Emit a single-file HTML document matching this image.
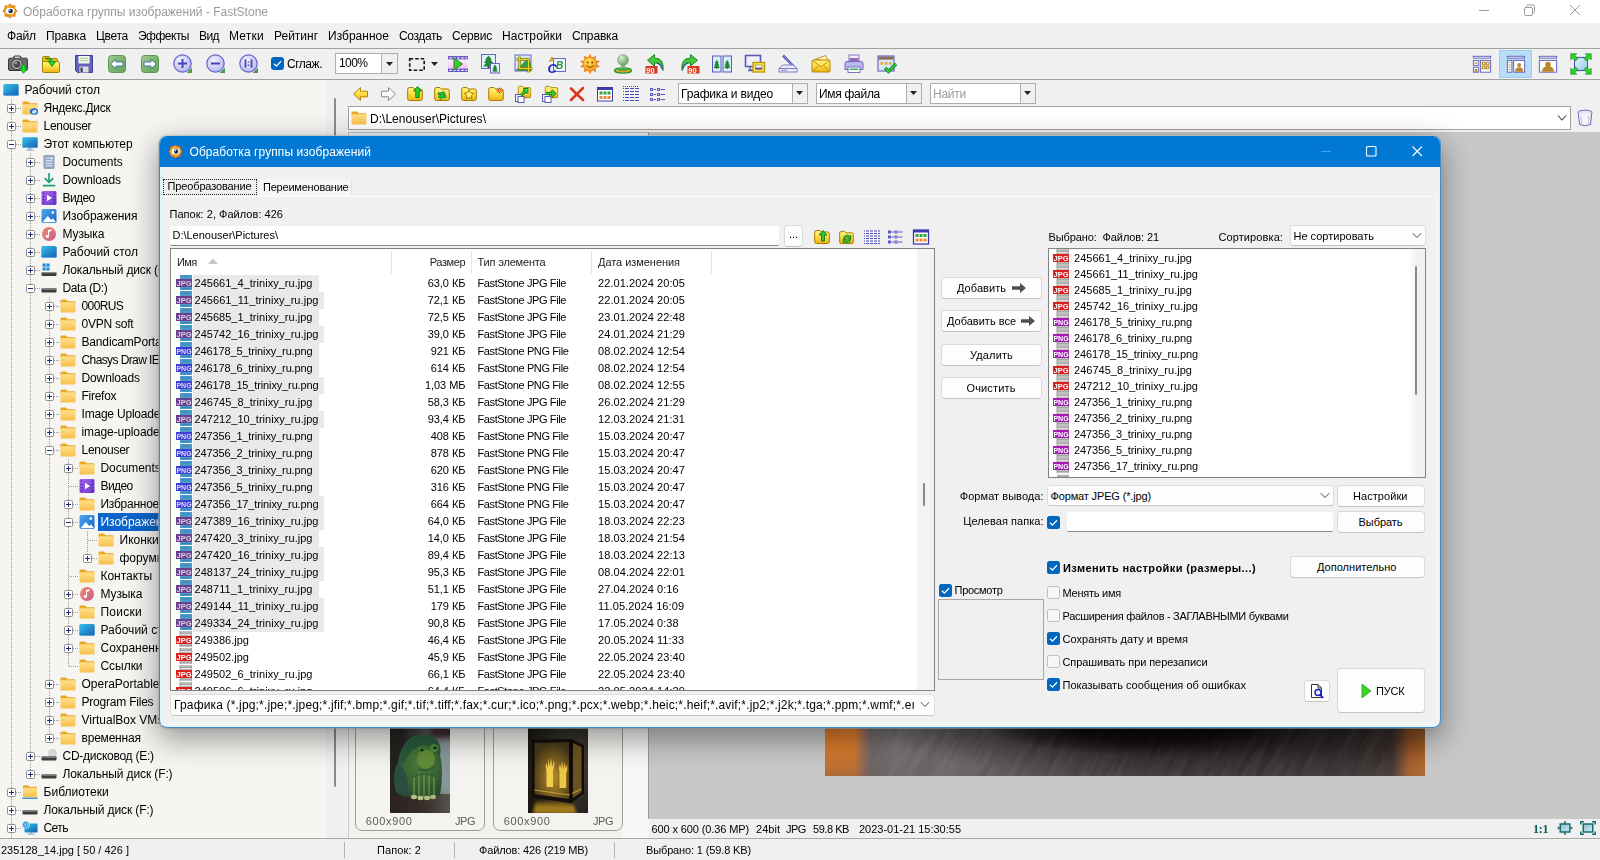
<!DOCTYPE html>
<html lang="ru"><head><meta charset="utf-8"><title>FastStone</title><style>
html,body{margin:0;padding:0}
body{width:1600px;height:860px;overflow:hidden;position:relative;background:#f0f0f0;font-family:'Liberation Sans',sans-serif}
body div,body svg,body span.t{position:absolute}
span.t{white-space:pre;height:16px}
</style></head><body>
<div style="left:0px;top:0px;width:1600px;height:23px;background:#fff"></div>
<span class="t" style="top:3.5px;font-size:12px;line-height:16px;color:#9a9a9a;letter-spacing:0.005px;left:23px;">Обработка группы изображений - FastStone</span>
<svg style="left:1470px;top:0" width="130" height="22" viewBox="0 0 130 22" fill="none" stroke="#9a9a9a" stroke-width="1"><path d="M9 10.500h10"/><rect x="54.500" y="7.500" width="8" height="8" rx="1.500"/><path d="M56.500 7.500v-1a1.500 1.500 0 0 1 1.500-1.500h5a1.500 1.500 0 0 1 1.500 1.500v5a1.500 1.500 0 0 1-1.500 1.500h-1"/><path d="M100 5l10 10M110 5l-10 10"/></svg>
<div style="left:0px;top:23px;width:1600px;height:25px;background:#f0f0f0"></div>
<span class="t" style="top:27.5px;font-size:12px;line-height:16px;color:#000;letter-spacing:-0.129px;left:7px;">Файл</span>
<span class="t" style="top:27.5px;font-size:12px;line-height:16px;color:#000;letter-spacing:-0.091px;left:46px;">Правка</span>
<span class="t" style="top:27.5px;font-size:12px;line-height:16px;color:#000;letter-spacing:-0.287px;left:96px;">Цвета</span>
<span class="t" style="top:27.5px;font-size:12px;line-height:16px;color:#000;letter-spacing:-0.509px;left:138px;">Эффекты</span>
<span class="t" style="top:27.5px;font-size:12px;line-height:16px;color:#000;letter-spacing:-0.573px;left:199px;">Вид</span>
<span class="t" style="top:27.5px;font-size:12px;line-height:16px;color:#000;letter-spacing:0.228px;left:229px;">Метки</span>
<span class="t" style="top:27.5px;font-size:12px;line-height:16px;color:#000;letter-spacing:-0.009px;left:274px;">Рейтинг</span>
<span class="t" style="top:27.5px;font-size:12px;line-height:16px;color:#000;letter-spacing:0.019px;left:328px;">Избранное</span>
<span class="t" style="top:27.5px;font-size:12px;line-height:16px;color:#000;letter-spacing:-0.373px;left:399px;">Создать</span>
<span class="t" style="top:27.5px;font-size:12px;line-height:16px;color:#000;letter-spacing:-0.182px;left:452px;">Сервис</span>
<span class="t" style="top:27.5px;font-size:12px;line-height:16px;color:#000;letter-spacing:0.128px;left:502px;">Настройки</span>
<span class="t" style="top:27.5px;font-size:12px;line-height:16px;color:#000;letter-spacing:-0.154px;left:572px;">Справка</span>
<div style="left:0px;top:48px;width:1600px;height:32px;background:#f0f0f0;border-top:1px solid #a0a0a0;border-bottom:1px solid #a0a0a0;box-sizing:border-box"></div>
<div style="left:0px;top:80px;width:326px;height:758px;background:#f6f5f1"></div>
<div style="left:326px;top:80px;width:19px;height:758px;background:#f0f0f0"></div>
<div style="left:334px;top:98px;width:2px;height:689px;background:#8a8a8a;border-radius:1px"></div>
<div style="left:345px;top:80px;width:1255px;height:26px;background:#f0f0f0"></div>
<div style="left:345px;top:106px;width:1255px;height:30px;background:#f0f0f0"></div>
<div style="left:348px;top:106px;width:1223px;height:24px;background:#fff;border:1px solid #a0a0a0;box-sizing:border-box"></div>
<span class="t" style="top:110.5px;font-size:12px;line-height:16px;color:#000;letter-spacing:0.029px;left:370px;">D:\Lenouser\Pictures\</span>
<svg style="left:1557px;top:114px" width="10" height="8" viewBox="0 0 10 8" fill="none" stroke="#444" stroke-width="1.100"><path d="M1 1.500l4 4.500 4-4.500"/></svg>
<div style="left:678px;top:83px;width:130px;height:21px;background:#fff;border:1px solid #adadad;box-sizing:border-box"></div>
<div style="left:792px;top:84px;width:15px;height:19px;background:#f0f0f0;border-left:1px solid #adadad;box-sizing:border-box"></div>
<svg style="left:796px;top:91px" width="7" height="4" viewBox="0 0 7 4"><path d="M0 0h7L3.500 4z" fill="#222"/></svg>
<span class="t" style="top:85.5px;font-size:12px;line-height:16px;color:#000;letter-spacing:-0.182px;left:681px;">Графика и видео</span>
<div style="left:816px;top:83px;width:106px;height:21px;background:#fff;border:1px solid #adadad;box-sizing:border-box"></div>
<div style="left:906px;top:84px;width:15px;height:19px;background:#f0f0f0;border-left:1px solid #adadad;box-sizing:border-box"></div>
<svg style="left:910px;top:91px" width="7" height="4" viewBox="0 0 7 4"><path d="M0 0h7L3.500 4z" fill="#222"/></svg>
<span class="t" style="top:85.5px;font-size:12px;line-height:16px;color:#000;letter-spacing:-0.293px;left:819px;">Имя файла</span>
<div style="left:930px;top:83px;width:106px;height:21px;background:#fff;border:1px solid #adadad;box-sizing:border-box"></div>
<div style="left:1020px;top:84px;width:15px;height:19px;background:#f0f0f0;border-left:1px solid #adadad;box-sizing:border-box"></div>
<svg style="left:1024px;top:91px" width="7" height="4" viewBox="0 0 7 4"><path d="M0 0h7L3.500 4z" fill="#222"/></svg>
<span class="t" style="top:85.5px;font-size:12px;line-height:16px;color:#9a9a9a;letter-spacing:-0.250px;left:933px;">Найти</span>
<div style="left:345px;top:132px;width:304px;height:706px;background:#f3f2ee"></div>
<div style="left:348px;top:132px;width:1px;height:706px;background:#c9c9c9"></div>
<div style="left:622px;top:132px;width:27px;height:706px;background:#f7f7f5"></div>
<div style="left:348px;top:132px;width:300px;height:1px;background:#bcbcbc"></div>
<div style="left:349px;top:133px;width:299px;height:3px;background:#eef1f5"></div>
<div style="left:649px;top:132px;width:951px;height:687px;background:#c8c8c8"></div>
<div style="left:648px;top:132px;width:1px;height:687px;background:#9a9a9a"></div>
<div style="left:649px;top:819px;width:951px;height:19px;background:#f0f0f0"></div>
<span class="t" style="top:821.0px;font-size:11px;line-height:16px;color:#000;letter-spacing:-0.114px;left:651.5px;">600 x 600 (0.36 MP)</span>
<span class="t" style="top:821.0px;font-size:11px;line-height:16px;color:#000;letter-spacing:0.028px;left:756px;">24bit</span>
<span class="t" style="top:821.0px;font-size:11px;line-height:16px;color:#000;letter-spacing:-0.600px;left:786px;">JPG</span>
<span class="t" style="top:821.0px;font-size:11px;line-height:16px;color:#000;letter-spacing:-0.449px;left:813px;">59.8 KB</span>
<span class="t" style="top:821.0px;font-size:11px;line-height:16px;color:#000;letter-spacing:-0.008px;left:859px;">2023-01-21 15:30:55</span>
<span class="t" style="top:820.5px;font-size:11px;line-height:16px;color:#0a5a5a;font-weight:700;letter-spacing:-0.302px;left:1533px;font-family:'Liberation Serif',serif;font-size:12px;">1:1</span>
<div style="left:0px;top:838px;width:1600px;height:22px;background:#f0f0f0;border-top:1px solid #a8a8a8;box-sizing:border-box"></div>
<div style="left:344px;top:842px;width:1px;height:16px;background:#b4b4b4"></div>
<div style="left:454px;top:842px;width:1px;height:16px;background:#b4b4b4"></div>
<div style="left:614px;top:842px;width:1px;height:16px;background:#b4b4b4"></div>
<span class="t" style="top:842.0px;font-size:11px;line-height:16px;color:#000;letter-spacing:0.006px;left:1px;">235128_14.jpg [ 50 / 426 ]</span>
<span class="t" style="top:842.0px;font-size:11px;line-height:16px;color:#000;letter-spacing:0.107px;left:377px;">Папок: 2</span>
<span class="t" style="top:842.0px;font-size:11px;line-height:16px;color:#000;letter-spacing:-0.145px;left:479px;">Файлов: 426 (219 MB)</span>
<span class="t" style="top:842.0px;font-size:11px;line-height:16px;color:#000;letter-spacing:-0.137px;left:646px;">Выбрано: 1 (59.8 KB)</span>

<svg width="0" height="0" style="left:0;top:0"><defs>
<linearGradient id="gF" x1="0" y1="0" x2="0" y2="1"><stop offset="0" stop-color="#ffe08a"/><stop offset="1" stop-color="#f7c04a"/></linearGradient>
<linearGradient id="gD" x1="0" y1="0" x2="1" y2="1"><stop offset="0" stop-color="#35c3ea"/><stop offset="1" stop-color="#155fb4"/></linearGradient>
<linearGradient id="gM" x1="0" y1="0" x2="1" y2="1"><stop offset="0" stop-color="#f08a6a"/><stop offset="1" stop-color="#c85a8c"/></linearGradient>
<linearGradient id="gP" x1="0" y1="0" x2="1" y2="1"><stop offset="0" stop-color="#4aa8f0"/><stop offset="1" stop-color="#1b63c8"/></linearGradient>
<linearGradient id="gV" x1="0" y1="0" x2="1" y2="1"><stop offset="0" stop-color="#a868f0"/><stop offset="1" stop-color="#6a38c8"/></linearGradient>
<symbol id="folder" viewBox="0 0 16 14"><path d="M0.500 1.800Q0.500 0.600 1.700 0.600H5.600Q6.300 0.600 6.800 1.200L7.600 2.200H14.400Q15.500 2.200 15.500 3.300V5H0.500z" fill="#e9a825"/><rect x="0.500" y="3.300" width="15" height="10.200" rx="1.100" fill="url(#gF)"/></symbol>
<symbol id="desktop" viewBox="0 0 16 14"><rect x="0.300" y="1" width="15.400" height="11.600" rx="1.600" fill="url(#gD)"/><rect x="0.300" y="10.600" width="15.400" height="2" rx="1" fill="#1a78c8" opacity=".7"/></symbol>
<symbol id="computer" viewBox="0 0 16 14"><rect x="0.300" y="0.300" width="15.400" height="10.400" rx="1.300" fill="url(#gD)"/><rect x="6.600" y="10.700" width="2.800" height="1.900" fill="#7da6c8"/><rect x="4" y="12.500" width="8" height="1.200" rx=".6" fill="#9ab4c8"/></symbol>
<symbol id="docs" viewBox="0 0 16 14"><rect x="2.500" y="0" width="11" height="14" rx="1.200" fill="#9aaccb"/><rect x="2.500" y="0" width="11" height="14" rx="1.200" fill="#7f95bd" opacity=".35"/><path d="M4.500 3.200h4M4.500 5.700h7M4.500 8.200h7M4.500 10.700h7" stroke="#eef2f8" stroke-width="1.100"/><rect x="9.300" y="2.300" width="2.400" height="2" fill="#eef2f8"/></symbol>
<symbol id="down" viewBox="0 0 16 14"><path d="M8 0.500v8.500M4.200 5.600L8 9.400l3.800-3.800" fill="none" stroke="#1d9f7c" stroke-width="1.700" stroke-linecap="round" stroke-linejoin="round"/><path d="M2.500 12.700h11" stroke="#1d9f7c" stroke-width="1.700" stroke-linecap="round"/></symbol>
<symbol id="video" viewBox="0 0 16 14"><rect x="0.500" y="0" width="15" height="14" rx="1.300" fill="url(#gV)"/><path d="M1.700 1.500h1.600v1.600H1.700zM1.700 4.700h1.600v1.600H1.700zM1.700 7.900h1.600v1.600H1.700zM1.700 11h1.600v1.600H1.700zM12.700 1.500h1.600v1.600h-1.600zM12.700 4.700h1.600v1.600h-1.600zM12.700 7.900h1.600v1.600h-1.600zM12.700 11h1.600v1.600h-1.600z" fill="#3a1a8a" opacity=".75"/><path d="M6 3.800v6.400l5-3.200z" fill="#fff"/></symbol>
<symbol id="pics" viewBox="0 0 16 14"><rect x="0.500" y="0" width="15" height="14" rx="1.500" fill="url(#gP)"/><path d="M1.500 13.200l5.200-6.200 3.600 4 1.700-1.800 3 4z" fill="#fff"/><circle cx="11.800" cy="3.600" r="1.300" fill="#fff"/></symbol>
<symbol id="music" viewBox="0 0 16 14"><circle cx="8" cy="7" r="7" fill="url(#gM)"/><path d="M7 3.200l3.600-.9v1.800L8 4.800v4.700a1.700 1.500 0 1 1-1-1.400z" fill="#fff"/></symbol>
<symbol id="drive" viewBox="0 0 16 14"><rect x="0.500" y="7.300" width="15" height="4.200" rx="1" fill="#3c3c3c"/><rect x="0.500" y="7.300" width="15" height="1.400" rx=".7" fill="#8a8a8a"/></symbol>
<symbol id="windrive" viewBox="0 0 16 14"><rect x="0.500" y="9" width="15" height="4" rx="1" fill="#3c3c3c"/><rect x="0.500" y="9" width="15" height="1.300" rx=".6" fill="#8a8a8a"/><path d="M1.500 0.500h3.200v3.200H1.500zM5.400 0.500h3.200v3.200H5.400zM1.500 4.400h3.200v3.200H1.500zM5.400 4.400h3.200v3.200H5.400z" fill="#1e8fe0"/></symbol>
<symbol id="cddrive" viewBox="0 0 16 14"><circle cx="11.500" cy="4.200" r="3.800" fill="#dcdcdc" stroke="#b4b4b4" stroke-width=".6"/><circle cx="11.500" cy="4.200" r="1.100" fill="#fff" stroke="#aaa" stroke-width=".5"/><rect x="0.500" y="7.300" width="15" height="4.200" rx="1" fill="#3c3c3c"/><rect x="0.500" y="7.300" width="15" height="1.400" rx=".7" fill="#8a8a8a"/></symbol>
<symbol id="lib" viewBox="0 0 16 14"><path d="M1 1.200Q1 0.200 2 0.200H5.600Q6.300 0.200 6.800 0.800L7.500 1.700H14Q15 1.700 15 2.700V5H1z" fill="#e9a825"/><rect x="1" y="2.800" width="14" height="9.400" rx="1" fill="url(#gF)"/><rect x="0.300" y="12.600" width="15.400" height="1.300" fill="#2a86d8"/></symbol>
<symbol id="net" viewBox="0 0 16 14"><rect x="2.500" y="2.500" width="13" height="9" rx="1.200" fill="url(#gD)"/><rect x="7.700" y="11.500" width="2.600" height="1.400" fill="#7da6c8"/><rect x="5.500" y="12.800" width="7" height="1" rx=".5" fill="#9ab4c8"/><circle cx="4" cy="3.800" r="3.600" fill="#3a9ae0" stroke="#cfe6f8" stroke-width=".7"/><path d="M2 2.500q2 1 1.500 3M5.500 1.500q-1 2 .8 4" stroke="#d8f0d0" stroke-width=".9" fill="none"/></symbol>
<symbol id="yadisk" viewBox="0 0 16 14"><path d="M0.500 1.800Q0.500 0.600 1.700 0.600H5.600Q6.300 0.600 6.800 1.200L7.600 2.200H14.400Q15.500 2.200 15.500 3.300V5H0.500z" fill="#e9a825"/><rect x="0.500" y="3.300" width="15" height="10.200" rx="1.100" fill="url(#gF)"/><ellipse cx="12" cy="10.500" rx="4" ry="3.300" fill="#1a6fd0"/><ellipse cx="12.300" cy="10.800" rx="2.300" ry="1.700" fill="#fff" transform="rotate(-25 12.300 10.800)"/><ellipse cx="12" cy="11" rx="1" ry=".7" fill="#6ab0f0" transform="rotate(-25 12 11)"/></symbol>
</defs></svg>

<div style="left:11px;top:99px;width:1px;height:730px;background:repeating-linear-gradient(to bottom,#9c9c9c 0 1px,transparent 1px 2px)"></div>
<div style="left:30px;top:153px;width:1px;height:622px;background:repeating-linear-gradient(to bottom,#9c9c9c 0 1px,transparent 1px 2px)"></div>
<div style="left:49px;top:297px;width:1px;height:442px;background:repeating-linear-gradient(to bottom,#9c9c9c 0 1px,transparent 1px 2px)"></div>
<div style="left:68px;top:459px;width:1px;height:208px;background:repeating-linear-gradient(to bottom,#9c9c9c 0 1px,transparent 1px 2px)"></div>
<div style="left:87px;top:531px;width:1px;height:28px;background:repeating-linear-gradient(to bottom,#9c9c9c 0 1px,transparent 1px 2px)"></div>
<div style="left:11px;top:833px;width:1px;height:5px;background:repeating-linear-gradient(to bottom,#9c9c9c 0 1px,transparent 1px 2px)"></div>
<svg style="left:3px;top:83px" width="16" height="14"><use href="#desktop"/></svg>
<span class="t" style="top:82.0px;font-size:12px;line-height:16px;color:#000;letter-spacing:0.014px;left:24.5px;">Рабочий стол</span>
<div style="left:12px;top:108px;width:10px;height:1px;background:repeating-linear-gradient(to right,#9c9c9c 0 1px,transparent 1px 2px)"></div>
<div style="left:7px;top:104px;width:9px;height:9px;background:#fff;border:1px solid #8f8f8f;border-radius:1.500px;box-sizing:border-box"><i style="position:absolute;left:1px;top:3px;width:5px;height:1px;background:#1f2f7a"></i><i style="position:absolute;left:3px;top:1px;width:1px;height:5px;background:#1f2f7a"></i></div>
<svg style="left:22px;top:101px" width="16" height="14"><use href="#yadisk"/></svg>
<span class="t" style="top:100.0px;font-size:12px;line-height:16px;color:#000;letter-spacing:-0.253px;left:43.5px;">Яндекс.Диск</span>
<div style="left:12px;top:126px;width:10px;height:1px;background:repeating-linear-gradient(to right,#9c9c9c 0 1px,transparent 1px 2px)"></div>
<div style="left:7px;top:122px;width:9px;height:9px;background:#fff;border:1px solid #8f8f8f;border-radius:1.500px;box-sizing:border-box"><i style="position:absolute;left:1px;top:3px;width:5px;height:1px;background:#1f2f7a"></i><i style="position:absolute;left:3px;top:1px;width:1px;height:5px;background:#1f2f7a"></i></div>
<svg style="left:22px;top:119px" width="16" height="14"><use href="#folder"/></svg>
<span class="t" style="top:118.0px;font-size:12px;line-height:16px;color:#000;letter-spacing:-0.281px;left:43.5px;">Lenouser</span>
<div style="left:12px;top:144px;width:10px;height:1px;background:repeating-linear-gradient(to right,#9c9c9c 0 1px,transparent 1px 2px)"></div>
<div style="left:7px;top:140px;width:9px;height:9px;background:#fff;border:1px solid #8f8f8f;border-radius:1.500px;box-sizing:border-box"><i style="position:absolute;left:1px;top:3px;width:5px;height:1px;background:#1f2f7a"></i></div>
<svg style="left:22px;top:137px" width="16" height="14"><use href="#computer"/></svg>
<span class="t" style="top:136.0px;font-size:12px;line-height:16px;color:#000;letter-spacing:-0.052px;left:43.5px;">Этот компьютер</span>
<div style="left:31px;top:162px;width:10px;height:1px;background:repeating-linear-gradient(to right,#9c9c9c 0 1px,transparent 1px 2px)"></div>
<div style="left:26px;top:158px;width:9px;height:9px;background:#fff;border:1px solid #8f8f8f;border-radius:1.500px;box-sizing:border-box"><i style="position:absolute;left:1px;top:3px;width:5px;height:1px;background:#1f2f7a"></i><i style="position:absolute;left:3px;top:1px;width:1px;height:5px;background:#1f2f7a"></i></div>
<svg style="left:41px;top:155px" width="16" height="14"><use href="#docs"/></svg>
<span class="t" style="top:154.0px;font-size:12px;line-height:16px;color:#000;letter-spacing:-0.056px;left:62.5px;">Documents</span>
<div style="left:31px;top:180px;width:10px;height:1px;background:repeating-linear-gradient(to right,#9c9c9c 0 1px,transparent 1px 2px)"></div>
<div style="left:26px;top:176px;width:9px;height:9px;background:#fff;border:1px solid #8f8f8f;border-radius:1.500px;box-sizing:border-box"><i style="position:absolute;left:1px;top:3px;width:5px;height:1px;background:#1f2f7a"></i><i style="position:absolute;left:3px;top:1px;width:1px;height:5px;background:#1f2f7a"></i></div>
<svg style="left:41px;top:173px" width="16" height="14"><use href="#down"/></svg>
<span class="t" style="top:172.0px;font-size:12px;line-height:16px;color:#000;letter-spacing:-0.108px;left:62.5px;">Downloads</span>
<div style="left:31px;top:198px;width:10px;height:1px;background:repeating-linear-gradient(to right,#9c9c9c 0 1px,transparent 1px 2px)"></div>
<div style="left:26px;top:194px;width:9px;height:9px;background:#fff;border:1px solid #8f8f8f;border-radius:1.500px;box-sizing:border-box"><i style="position:absolute;left:1px;top:3px;width:5px;height:1px;background:#1f2f7a"></i><i style="position:absolute;left:3px;top:1px;width:1px;height:5px;background:#1f2f7a"></i></div>
<svg style="left:41px;top:191px" width="16" height="14"><use href="#video"/></svg>
<span class="t" style="top:190.0px;font-size:12px;line-height:16px;color:#000;letter-spacing:-0.600px;left:62.5px;">Видео</span>
<div style="left:31px;top:216px;width:10px;height:1px;background:repeating-linear-gradient(to right,#9c9c9c 0 1px,transparent 1px 2px)"></div>
<div style="left:26px;top:212px;width:9px;height:9px;background:#fff;border:1px solid #8f8f8f;border-radius:1.500px;box-sizing:border-box"><i style="position:absolute;left:1px;top:3px;width:5px;height:1px;background:#1f2f7a"></i><i style="position:absolute;left:3px;top:1px;width:1px;height:5px;background:#1f2f7a"></i></div>
<svg style="left:41px;top:209px" width="16" height="14"><use href="#pics"/></svg>
<span class="t" style="top:208.0px;font-size:12px;line-height:16px;color:#000;letter-spacing:-0.038px;left:62.5px;">Изображения</span>
<div style="left:31px;top:234px;width:10px;height:1px;background:repeating-linear-gradient(to right,#9c9c9c 0 1px,transparent 1px 2px)"></div>
<div style="left:26px;top:230px;width:9px;height:9px;background:#fff;border:1px solid #8f8f8f;border-radius:1.500px;box-sizing:border-box"><i style="position:absolute;left:1px;top:3px;width:5px;height:1px;background:#1f2f7a"></i><i style="position:absolute;left:3px;top:1px;width:1px;height:5px;background:#1f2f7a"></i></div>
<svg style="left:41px;top:227px" width="16" height="14"><use href="#music"/></svg>
<span class="t" style="top:226.0px;font-size:12px;line-height:16px;color:#000;letter-spacing:-0.109px;left:62.5px;">Музыка</span>
<div style="left:31px;top:252px;width:10px;height:1px;background:repeating-linear-gradient(to right,#9c9c9c 0 1px,transparent 1px 2px)"></div>
<div style="left:26px;top:248px;width:9px;height:9px;background:#fff;border:1px solid #8f8f8f;border-radius:1.500px;box-sizing:border-box"><i style="position:absolute;left:1px;top:3px;width:5px;height:1px;background:#1f2f7a"></i><i style="position:absolute;left:3px;top:1px;width:1px;height:5px;background:#1f2f7a"></i></div>
<svg style="left:41px;top:245px" width="16" height="14"><use href="#desktop"/></svg>
<span class="t" style="top:244.0px;font-size:12px;line-height:16px;color:#000;letter-spacing:0.014px;left:62.5px;">Рабочий стол</span>
<div style="left:31px;top:270px;width:10px;height:1px;background:repeating-linear-gradient(to right,#9c9c9c 0 1px,transparent 1px 2px)"></div>
<div style="left:26px;top:266px;width:9px;height:9px;background:#fff;border:1px solid #8f8f8f;border-radius:1.500px;box-sizing:border-box"><i style="position:absolute;left:1px;top:3px;width:5px;height:1px;background:#1f2f7a"></i><i style="position:absolute;left:3px;top:1px;width:1px;height:5px;background:#1f2f7a"></i></div>
<svg style="left:41px;top:263px" width="16" height="14"><use href="#windrive"/></svg>
<span class="t" style="top:262.0px;font-size:12px;line-height:16px;color:#000;letter-spacing:-0.135px;left:62.5px;">Локальный диск (C:)</span>
<div style="left:31px;top:288px;width:10px;height:1px;background:repeating-linear-gradient(to right,#9c9c9c 0 1px,transparent 1px 2px)"></div>
<div style="left:26px;top:284px;width:9px;height:9px;background:#fff;border:1px solid #8f8f8f;border-radius:1.500px;box-sizing:border-box"><i style="position:absolute;left:1px;top:3px;width:5px;height:1px;background:#1f2f7a"></i></div>
<svg style="left:41px;top:281px" width="16" height="14"><use href="#drive"/></svg>
<span class="t" style="top:280.0px;font-size:12px;line-height:16px;color:#000;letter-spacing:-0.432px;left:62.5px;">Data (D:)</span>
<div style="left:50px;top:306px;width:10px;height:1px;background:repeating-linear-gradient(to right,#9c9c9c 0 1px,transparent 1px 2px)"></div>
<div style="left:45px;top:302px;width:9px;height:9px;background:#fff;border:1px solid #8f8f8f;border-radius:1.500px;box-sizing:border-box"><i style="position:absolute;left:1px;top:3px;width:5px;height:1px;background:#1f2f7a"></i><i style="position:absolute;left:3px;top:1px;width:1px;height:5px;background:#1f2f7a"></i></div>
<svg style="left:60px;top:299px" width="16" height="14"><use href="#folder"/></svg>
<span class="t" style="top:298.0px;font-size:12px;line-height:16px;color:#000;letter-spacing:-0.600px;left:81.5px;">000RUS</span>
<div style="left:50px;top:324px;width:10px;height:1px;background:repeating-linear-gradient(to right,#9c9c9c 0 1px,transparent 1px 2px)"></div>
<div style="left:45px;top:320px;width:9px;height:9px;background:#fff;border:1px solid #8f8f8f;border-radius:1.500px;box-sizing:border-box"><i style="position:absolute;left:1px;top:3px;width:5px;height:1px;background:#1f2f7a"></i><i style="position:absolute;left:3px;top:1px;width:1px;height:5px;background:#1f2f7a"></i></div>
<svg style="left:60px;top:317px" width="16" height="14"><use href="#folder"/></svg>
<span class="t" style="top:316.0px;font-size:12px;line-height:16px;color:#000;letter-spacing:-0.237px;left:81.5px;">0VPN soft</span>
<div style="left:50px;top:342px;width:10px;height:1px;background:repeating-linear-gradient(to right,#9c9c9c 0 1px,transparent 1px 2px)"></div>
<div style="left:45px;top:338px;width:9px;height:9px;background:#fff;border:1px solid #8f8f8f;border-radius:1.500px;box-sizing:border-box"><i style="position:absolute;left:1px;top:3px;width:5px;height:1px;background:#1f2f7a"></i><i style="position:absolute;left:3px;top:1px;width:1px;height:5px;background:#1f2f7a"></i></div>
<svg style="left:60px;top:335px" width="16" height="14"><use href="#folder"/></svg>
<span class="t" style="top:334.0px;font-size:12px;line-height:16px;color:#000;letter-spacing:-0.160px;left:81.5px;">BandicamPortable</span>
<div style="left:50px;top:360px;width:10px;height:1px;background:repeating-linear-gradient(to right,#9c9c9c 0 1px,transparent 1px 2px)"></div>
<div style="left:45px;top:356px;width:9px;height:9px;background:#fff;border:1px solid #8f8f8f;border-radius:1.500px;box-sizing:border-box"><i style="position:absolute;left:1px;top:3px;width:5px;height:1px;background:#1f2f7a"></i><i style="position:absolute;left:3px;top:1px;width:1px;height:5px;background:#1f2f7a"></i></div>
<svg style="left:60px;top:353px" width="16" height="14"><use href="#folder"/></svg>
<span class="t" style="top:352.0px;font-size:12px;line-height:16px;color:#000;letter-spacing:-0.600px;left:81.5px;">Chasys Draw IES</span>
<div style="left:50px;top:378px;width:10px;height:1px;background:repeating-linear-gradient(to right,#9c9c9c 0 1px,transparent 1px 2px)"></div>
<div style="left:45px;top:374px;width:9px;height:9px;background:#fff;border:1px solid #8f8f8f;border-radius:1.500px;box-sizing:border-box"><i style="position:absolute;left:1px;top:3px;width:5px;height:1px;background:#1f2f7a"></i><i style="position:absolute;left:3px;top:1px;width:1px;height:5px;background:#1f2f7a"></i></div>
<svg style="left:60px;top:371px" width="16" height="14"><use href="#folder"/></svg>
<span class="t" style="top:370.0px;font-size:12px;line-height:16px;color:#000;letter-spacing:-0.108px;left:81.5px;">Downloads</span>
<div style="left:50px;top:396px;width:10px;height:1px;background:repeating-linear-gradient(to right,#9c9c9c 0 1px,transparent 1px 2px)"></div>
<div style="left:45px;top:392px;width:9px;height:9px;background:#fff;border:1px solid #8f8f8f;border-radius:1.500px;box-sizing:border-box"><i style="position:absolute;left:1px;top:3px;width:5px;height:1px;background:#1f2f7a"></i><i style="position:absolute;left:3px;top:1px;width:1px;height:5px;background:#1f2f7a"></i></div>
<svg style="left:60px;top:389px" width="16" height="14"><use href="#folder"/></svg>
<span class="t" style="top:388.0px;font-size:12px;line-height:16px;color:#000;letter-spacing:-0.270px;left:81.5px;">Firefox</span>
<div style="left:50px;top:414px;width:10px;height:1px;background:repeating-linear-gradient(to right,#9c9c9c 0 1px,transparent 1px 2px)"></div>
<div style="left:45px;top:410px;width:9px;height:9px;background:#fff;border:1px solid #8f8f8f;border-radius:1.500px;box-sizing:border-box"><i style="position:absolute;left:1px;top:3px;width:5px;height:1px;background:#1f2f7a"></i><i style="position:absolute;left:3px;top:1px;width:1px;height:5px;background:#1f2f7a"></i></div>
<svg style="left:60px;top:407px" width="16" height="14"><use href="#folder"/></svg>
<span class="t" style="top:406.0px;font-size:12px;line-height:16px;color:#000;letter-spacing:-0.206px;left:81.5px;">Image Uploader</span>
<div style="left:50px;top:432px;width:10px;height:1px;background:repeating-linear-gradient(to right,#9c9c9c 0 1px,transparent 1px 2px)"></div>
<div style="left:45px;top:428px;width:9px;height:9px;background:#fff;border:1px solid #8f8f8f;border-radius:1.500px;box-sizing:border-box"><i style="position:absolute;left:1px;top:3px;width:5px;height:1px;background:#1f2f7a"></i><i style="position:absolute;left:3px;top:1px;width:1px;height:5px;background:#1f2f7a"></i></div>
<svg style="left:60px;top:425px" width="16" height="14"><use href="#folder"/></svg>
<span class="t" style="top:424.0px;font-size:12px;line-height:16px;color:#000;letter-spacing:-0.099px;left:81.5px;">image-uploader</span>
<div style="left:50px;top:450px;width:10px;height:1px;background:repeating-linear-gradient(to right,#9c9c9c 0 1px,transparent 1px 2px)"></div>
<div style="left:45px;top:446px;width:9px;height:9px;background:#fff;border:1px solid #8f8f8f;border-radius:1.500px;box-sizing:border-box"><i style="position:absolute;left:1px;top:3px;width:5px;height:1px;background:#1f2f7a"></i></div>
<svg style="left:60px;top:443px" width="16" height="14"><use href="#folder"/></svg>
<span class="t" style="top:442.0px;font-size:12px;line-height:16px;color:#000;letter-spacing:-0.281px;left:81.5px;">Lenouser</span>
<div style="left:69px;top:468px;width:10px;height:1px;background:repeating-linear-gradient(to right,#9c9c9c 0 1px,transparent 1px 2px)"></div>
<div style="left:64px;top:464px;width:9px;height:9px;background:#fff;border:1px solid #8f8f8f;border-radius:1.500px;box-sizing:border-box"><i style="position:absolute;left:1px;top:3px;width:5px;height:1px;background:#1f2f7a"></i><i style="position:absolute;left:3px;top:1px;width:1px;height:5px;background:#1f2f7a"></i></div>
<svg style="left:79px;top:461px" width="16" height="14"><use href="#folder"/></svg>
<span class="t" style="top:460.0px;font-size:12px;line-height:16px;color:#000;letter-spacing:-0.056px;left:100.5px;">Documents</span>
<div style="left:69px;top:486px;width:10px;height:1px;background:repeating-linear-gradient(to right,#9c9c9c 0 1px,transparent 1px 2px)"></div>
<svg style="left:79px;top:479px" width="16" height="14"><use href="#video"/></svg>
<span class="t" style="top:478.0px;font-size:12px;line-height:16px;color:#000;letter-spacing:-0.600px;left:100.5px;">Видео</span>
<div style="left:69px;top:504px;width:10px;height:1px;background:repeating-linear-gradient(to right,#9c9c9c 0 1px,transparent 1px 2px)"></div>
<div style="left:64px;top:500px;width:9px;height:9px;background:#fff;border:1px solid #8f8f8f;border-radius:1.500px;box-sizing:border-box"><i style="position:absolute;left:1px;top:3px;width:5px;height:1px;background:#1f2f7a"></i><i style="position:absolute;left:3px;top:1px;width:1px;height:5px;background:#1f2f7a"></i></div>
<svg style="left:79px;top:497px" width="16" height="14"><use href="#folder"/></svg>
<span class="t" style="top:496.0px;font-size:12px;line-height:16px;color:#000;letter-spacing:-0.259px;left:100.5px;">Избранное</span>
<div style="left:69px;top:522px;width:10px;height:1px;background:repeating-linear-gradient(to right,#9c9c9c 0 1px,transparent 1px 2px)"></div>
<div style="left:64px;top:518px;width:9px;height:9px;background:#fff;border:1px solid #8f8f8f;border-radius:1.500px;box-sizing:border-box"><i style="position:absolute;left:1px;top:3px;width:5px;height:1px;background:#1f2f7a"></i></div>
<div style="left:98.0px;top:513px;width:200px;height:18px;background:#0a64cc"></div>
<svg style="left:79px;top:515px" width="16" height="14"><use href="#pics"/></svg>
<span class="t" style="top:514.0px;font-size:12px;line-height:16px;color:#fff;letter-spacing:-0.038px;left:100.5px;">Изображения</span>
<div style="left:88px;top:540px;width:10px;height:1px;background:repeating-linear-gradient(to right,#9c9c9c 0 1px,transparent 1px 2px)"></div>
<svg style="left:98px;top:533px" width="16" height="14"><use href="#folder"/></svg>
<span class="t" style="top:532.0px;font-size:12px;line-height:16px;color:#000;left:119.5px;">Иконки</span>
<div style="left:88px;top:558px;width:10px;height:1px;background:repeating-linear-gradient(to right,#9c9c9c 0 1px,transparent 1px 2px)"></div>
<div style="left:83px;top:554px;width:9px;height:9px;background:#fff;border:1px solid #8f8f8f;border-radius:1.500px;box-sizing:border-box"><i style="position:absolute;left:1px;top:3px;width:5px;height:1px;background:#1f2f7a"></i><i style="position:absolute;left:3px;top:1px;width:1px;height:5px;background:#1f2f7a"></i></div>
<svg style="left:98px;top:551px" width="16" height="14"><use href="#folder"/></svg>
<span class="t" style="top:550.0px;font-size:12px;line-height:16px;color:#000;left:119.5px;">форумы</span>
<div style="left:69px;top:576px;width:10px;height:1px;background:repeating-linear-gradient(to right,#9c9c9c 0 1px,transparent 1px 2px)"></div>
<svg style="left:79px;top:569px" width="16" height="14"><use href="#folder"/></svg>
<span class="t" style="top:568.0px;font-size:12px;line-height:16px;color:#000;letter-spacing:-0.030px;left:100.5px;">Контакты</span>
<div style="left:69px;top:594px;width:10px;height:1px;background:repeating-linear-gradient(to right,#9c9c9c 0 1px,transparent 1px 2px)"></div>
<div style="left:64px;top:590px;width:9px;height:9px;background:#fff;border:1px solid #8f8f8f;border-radius:1.500px;box-sizing:border-box"><i style="position:absolute;left:1px;top:3px;width:5px;height:1px;background:#1f2f7a"></i><i style="position:absolute;left:3px;top:1px;width:1px;height:5px;background:#1f2f7a"></i></div>
<svg style="left:79px;top:587px" width="16" height="14"><use href="#music"/></svg>
<span class="t" style="top:586.0px;font-size:12px;line-height:16px;color:#000;letter-spacing:-0.109px;left:100.5px;">Музыка</span>
<div style="left:69px;top:612px;width:10px;height:1px;background:repeating-linear-gradient(to right,#9c9c9c 0 1px,transparent 1px 2px)"></div>
<div style="left:64px;top:608px;width:9px;height:9px;background:#fff;border:1px solid #8f8f8f;border-radius:1.500px;box-sizing:border-box"><i style="position:absolute;left:1px;top:3px;width:5px;height:1px;background:#1f2f7a"></i><i style="position:absolute;left:3px;top:1px;width:1px;height:5px;background:#1f2f7a"></i></div>
<svg style="left:79px;top:605px" width="16" height="14"><use href="#folder"/></svg>
<span class="t" style="top:604.0px;font-size:12px;line-height:16px;color:#000;letter-spacing:0.239px;left:100.5px;">Поиски</span>
<div style="left:69px;top:630px;width:10px;height:1px;background:repeating-linear-gradient(to right,#9c9c9c 0 1px,transparent 1px 2px)"></div>
<div style="left:64px;top:626px;width:9px;height:9px;background:#fff;border:1px solid #8f8f8f;border-radius:1.500px;box-sizing:border-box"><i style="position:absolute;left:1px;top:3px;width:5px;height:1px;background:#1f2f7a"></i><i style="position:absolute;left:3px;top:1px;width:1px;height:5px;background:#1f2f7a"></i></div>
<svg style="left:79px;top:623px" width="16" height="14"><use href="#desktop"/></svg>
<span class="t" style="top:622.0px;font-size:12px;line-height:16px;color:#000;letter-spacing:0.014px;left:100.5px;">Рабочий стол</span>
<div style="left:69px;top:648px;width:10px;height:1px;background:repeating-linear-gradient(to right,#9c9c9c 0 1px,transparent 1px 2px)"></div>
<div style="left:64px;top:644px;width:9px;height:9px;background:#fff;border:1px solid #8f8f8f;border-radius:1.500px;box-sizing:border-box"><i style="position:absolute;left:1px;top:3px;width:5px;height:1px;background:#1f2f7a"></i><i style="position:absolute;left:3px;top:1px;width:1px;height:5px;background:#1f2f7a"></i></div>
<svg style="left:79px;top:641px" width="16" height="14"><use href="#folder"/></svg>
<span class="t" style="top:640.0px;font-size:12px;line-height:16px;color:#000;left:100.5px;">Сохраненные игры</span>
<div style="left:69px;top:666px;width:10px;height:1px;background:repeating-linear-gradient(to right,#9c9c9c 0 1px,transparent 1px 2px)"></div>
<svg style="left:79px;top:659px" width="16" height="14"><use href="#folder"/></svg>
<span class="t" style="top:658.0px;font-size:12px;line-height:16px;color:#000;letter-spacing:-0.042px;left:100.5px;">Ссылки</span>
<div style="left:50px;top:684px;width:10px;height:1px;background:repeating-linear-gradient(to right,#9c9c9c 0 1px,transparent 1px 2px)"></div>
<div style="left:45px;top:680px;width:9px;height:9px;background:#fff;border:1px solid #8f8f8f;border-radius:1.500px;box-sizing:border-box"><i style="position:absolute;left:1px;top:3px;width:5px;height:1px;background:#1f2f7a"></i><i style="position:absolute;left:3px;top:1px;width:1px;height:5px;background:#1f2f7a"></i></div>
<svg style="left:60px;top:677px" width="16" height="14"><use href="#folder"/></svg>
<span class="t" style="top:676.0px;font-size:12px;line-height:16px;color:#000;left:81.5px;">OperaPortable</span>
<div style="left:50px;top:702px;width:10px;height:1px;background:repeating-linear-gradient(to right,#9c9c9c 0 1px,transparent 1px 2px)"></div>
<div style="left:45px;top:698px;width:9px;height:9px;background:#fff;border:1px solid #8f8f8f;border-radius:1.500px;box-sizing:border-box"><i style="position:absolute;left:1px;top:3px;width:5px;height:1px;background:#1f2f7a"></i><i style="position:absolute;left:3px;top:1px;width:1px;height:5px;background:#1f2f7a"></i></div>
<svg style="left:60px;top:695px" width="16" height="14"><use href="#folder"/></svg>
<span class="t" style="top:694.0px;font-size:12px;line-height:16px;color:#000;letter-spacing:-0.214px;left:81.5px;">Program Files</span>
<div style="left:50px;top:720px;width:10px;height:1px;background:repeating-linear-gradient(to right,#9c9c9c 0 1px,transparent 1px 2px)"></div>
<div style="left:45px;top:716px;width:9px;height:9px;background:#fff;border:1px solid #8f8f8f;border-radius:1.500px;box-sizing:border-box"><i style="position:absolute;left:1px;top:3px;width:5px;height:1px;background:#1f2f7a"></i><i style="position:absolute;left:3px;top:1px;width:1px;height:5px;background:#1f2f7a"></i></div>
<svg style="left:60px;top:713px" width="16" height="14"><use href="#folder"/></svg>
<span class="t" style="top:712.0px;font-size:12px;line-height:16px;color:#000;left:81.5px;">VirtualBox VMs</span>
<div style="left:50px;top:738px;width:10px;height:1px;background:repeating-linear-gradient(to right,#9c9c9c 0 1px,transparent 1px 2px)"></div>
<div style="left:45px;top:734px;width:9px;height:9px;background:#fff;border:1px solid #8f8f8f;border-radius:1.500px;box-sizing:border-box"><i style="position:absolute;left:1px;top:3px;width:5px;height:1px;background:#1f2f7a"></i><i style="position:absolute;left:3px;top:1px;width:1px;height:5px;background:#1f2f7a"></i></div>
<svg style="left:60px;top:731px" width="16" height="14"><use href="#folder"/></svg>
<span class="t" style="top:730.0px;font-size:12px;line-height:16px;color:#000;letter-spacing:-0.209px;left:81.5px;">временная</span>
<div style="left:31px;top:756px;width:10px;height:1px;background:repeating-linear-gradient(to right,#9c9c9c 0 1px,transparent 1px 2px)"></div>
<div style="left:26px;top:752px;width:9px;height:9px;background:#fff;border:1px solid #8f8f8f;border-radius:1.500px;box-sizing:border-box"><i style="position:absolute;left:1px;top:3px;width:5px;height:1px;background:#1f2f7a"></i><i style="position:absolute;left:3px;top:1px;width:1px;height:5px;background:#1f2f7a"></i></div>
<svg style="left:41px;top:749px" width="16" height="14"><use href="#cddrive"/></svg>
<span class="t" style="top:748.0px;font-size:12px;line-height:16px;color:#000;letter-spacing:-0.264px;left:62.5px;">CD-дисковод (E:)</span>
<div style="left:31px;top:774px;width:10px;height:1px;background:repeating-linear-gradient(to right,#9c9c9c 0 1px,transparent 1px 2px)"></div>
<div style="left:26px;top:770px;width:9px;height:9px;background:#fff;border:1px solid #8f8f8f;border-radius:1.500px;box-sizing:border-box"><i style="position:absolute;left:1px;top:3px;width:5px;height:1px;background:#1f2f7a"></i><i style="position:absolute;left:3px;top:1px;width:1px;height:5px;background:#1f2f7a"></i></div>
<svg style="left:41px;top:767px" width="16" height="14"><use href="#drive"/></svg>
<span class="t" style="top:766.0px;font-size:12px;line-height:16px;color:#000;letter-spacing:-0.118px;left:62.5px;">Локальный диск (F:)</span>
<div style="left:12px;top:792px;width:10px;height:1px;background:repeating-linear-gradient(to right,#9c9c9c 0 1px,transparent 1px 2px)"></div>
<div style="left:7px;top:788px;width:9px;height:9px;background:#fff;border:1px solid #8f8f8f;border-radius:1.500px;box-sizing:border-box"><i style="position:absolute;left:1px;top:3px;width:5px;height:1px;background:#1f2f7a"></i><i style="position:absolute;left:3px;top:1px;width:1px;height:5px;background:#1f2f7a"></i></div>
<svg style="left:22px;top:785px" width="16" height="14"><use href="#lib"/></svg>
<span class="t" style="top:784.0px;font-size:12px;line-height:16px;color:#000;letter-spacing:0.028px;left:43.5px;">Библиотеки</span>
<div style="left:12px;top:810px;width:10px;height:1px;background:repeating-linear-gradient(to right,#9c9c9c 0 1px,transparent 1px 2px)"></div>
<div style="left:7px;top:806px;width:9px;height:9px;background:#fff;border:1px solid #8f8f8f;border-radius:1.500px;box-sizing:border-box"><i style="position:absolute;left:1px;top:3px;width:5px;height:1px;background:#1f2f7a"></i><i style="position:absolute;left:3px;top:1px;width:1px;height:5px;background:#1f2f7a"></i></div>
<svg style="left:22px;top:803px" width="16" height="14"><use href="#drive"/></svg>
<span class="t" style="top:802.0px;font-size:12px;line-height:16px;color:#000;letter-spacing:-0.118px;left:43.5px;">Локальный диск (F:)</span>
<div style="left:12px;top:828px;width:10px;height:1px;background:repeating-linear-gradient(to right,#9c9c9c 0 1px,transparent 1px 2px)"></div>
<div style="left:7px;top:824px;width:9px;height:9px;background:#fff;border:1px solid #8f8f8f;border-radius:1.500px;box-sizing:border-box"><i style="position:absolute;left:1px;top:3px;width:5px;height:1px;background:#1f2f7a"></i><i style="position:absolute;left:3px;top:1px;width:1px;height:5px;background:#1f2f7a"></i></div>
<svg style="left:22px;top:821px" width="16" height="14"><use href="#net"/></svg>
<span class="t" style="top:820.0px;font-size:12px;line-height:16px;color:#000;letter-spacing:-0.600px;left:43.5px;">Сеть</span>

<svg width="0" height="0" style="left:0;top:0"><defs>
<linearGradient id="gY" x1="0" y1="0" x2="0" y2="1"><stop offset="0" stop-color="#fff27c"/><stop offset=".45" stop-color="#ffe04a"/><stop offset="1" stop-color="#efb212"/></linearGradient>
<linearGradient id="gG" x1="0" y1="0" x2="1" y2="1"><stop offset="0" stop-color="#a4d098"/><stop offset=".5" stop-color="#7ab46c"/><stop offset="1" stop-color="#6aa45c"/></linearGradient>
<radialGradient id="gL" cx=".4" cy=".35" r=".7"><stop offset="0" stop-color="#f4f4ff"/><stop offset="1" stop-color="#b4b4ee"/></radialGradient>
<linearGradient id="gB" x1="0" y1="0" x2="1" y2="1"><stop offset="0" stop-color="#e8f6fb"/><stop offset="1" stop-color="#8ccde6"/></linearGradient>
<radialGradient id="gS" cx=".4" cy=".35" r=".7"><stop offset="0" stop-color="#ffe85a"/><stop offset="1" stop-color="#f59a1a"/></radialGradient>
<radialGradient id="gGl" cx=".35" cy=".3" r=".8"><stop offset="0" stop-color="#d8ecd0"/><stop offset="1" stop-color="#5c9a5a"/></radialGradient>
<symbol id="tree" viewBox="0 0 8 10" preserveAspectRatio="none"><path d="M4 0L6.500 3.300H5.500L7.400 6H5.800L8 8.800H0L2.200 6H.6L2.500 3.300H1.500z" fill="#1f8a30"/><rect x="3.300" y="8.500" width="1.400" height="1.500" fill="#5a3a1a"/></symbol>
<symbol id="yfold" viewBox="0 0 16 16"><path d="M.7 3.300Q.7 1.500 2.500 1.500H6L7.500 3H13.500Q15.300 3 15.300 4.800V12.700Q15.300 14.500 13.500 14.500H2.500Q.7 14.500 .7 12.700z" fill="url(#gY)" stroke="#a47a00" stroke-width="1"/></symbol>
</defs></svg>

<svg style="left:7.0px;top:53.0px" width="22" height="22" viewBox="0 0 22 22"><path d="M1.500 6.700Q1.500 5.200 3 5.200H6L7.300 3H13.300L14.600 5.200H19Q20.500 5.200 20.500 6.700V16Q20.500 17.500 19 17.500H3Q1.500 17.500 1.500 16z" fill="#6c6c6c" stroke="#3a3a3a" stroke-width="1"/><rect x="8" y="3.600" width="4.600" height="1.200" fill="#e8e8e8"/><circle cx="10" cy="11.300" r="5.300" fill="#c4c4c4" stroke="#3a3a3a" stroke-width="1"/><circle cx="10" cy="11.300" r="3.600" fill="#4a4a58"/><circle cx="8.800" cy="10" r="1.300" fill="#9a9aa8"/><path d="M14.800 12h3.400v3.500h2.300l-4 4.800-4-4.800h2.300z" fill="#22dd2a" stroke="#0a8a1a" stroke-width=".8"/></svg>
<svg style="left:40.0px;top:53.0px" width="22" height="22" viewBox="0 0 22 22"><path d="M2.500 5Q2.500 3.500 4 3.500H9L10.500 5.500H16Q17.500 5.500 17.500 7V18.500H2.500z" fill="#e8c410" stroke="#a88400" stroke-width="1"/><path d="M5.500 8.500H17.500Q19.500 8.500 19.500 10.500V18Q19.500 19.500 18 19.500H4Q2.500 19.500 2.500 18V8.500z" fill="url(#gY)" stroke="#a88400" stroke-width="1"/><path d="M5 5.500q6-1.500 8 3h2.500L12 13.500 8.500 8.500H11q-1.500-2.500-6-3z" fill="#20d828" stroke="#0a7a14" stroke-width=".8"/></svg>
<svg style="left:73.0px;top:53.0px" width="22" height="22" viewBox="0 0 22 22"><path d="M2.500 2.500H19.500V19.500H4.500L2.500 17.500z" fill="#6262ba" stroke="#40409a" stroke-width="1"/><rect x="5.500" y="3" width="11" height="7.500" fill="#f2f8f0"/><path d="M7 5.300h8M7 7.700h8" stroke="#9cc88c" stroke-width="1"/><rect x="6.500" y="13.500" width="9" height="6" fill="#dcdcdc"/><rect x="7.500" y="14.500" width="2.200" height="4.500" fill="#3a3a6a"/></svg>
<svg style="left:106.0px;top:53.0px" width="22" height="22" viewBox="0 0 22 22"><rect x="2.500" y="2.500" width="17" height="17" rx="3.200" fill="url(#gG)" stroke="#5a9a50" stroke-width="1"/><path d="M4.500 11l5.500-4.800v2.800h7v4h-7v2.800z" fill="#fff" stroke="#3a6aa8" stroke-width=".9"/></svg>
<svg style="left:139.0px;top:53.0px" width="22" height="22" viewBox="0 0 22 22"><rect x="2.500" y="2.500" width="17" height="17" rx="3.200" fill="url(#gG)" stroke="#5a9a50" stroke-width="1"/><path d="M17.500 11l-5.500-4.800v2.800h-7v4h7v2.800z" fill="#fff" stroke="#3a6aa8" stroke-width=".9"/></svg>
<svg style="left:172.0px;top:53.0px" width="22" height="22" viewBox="0 0 22 22"><path d="M20 14.500v5.500h-5.500z" fill="#4a9a4a"/><circle cx="10.500" cy="10.500" r="8.700" fill="url(#gL)" stroke="#6464c8" stroke-width="1.200"/><path d="M6 10.500h9M10.500 6v9" stroke="#4444b4" stroke-width="2"/></svg>
<svg style="left:205.0px;top:53.0px" width="22" height="22" viewBox="0 0 22 22"><path d="M20 14.500v5.500h-5.500z" fill="#4a9a4a"/><circle cx="10.500" cy="10.500" r="8.700" fill="url(#gL)" stroke="#6464c8" stroke-width="1.200"/><path d="M6 10.500h9" stroke="#4444b4" stroke-width="2"/></svg>
<svg style="left:238.0px;top:53.0px" width="22" height="22" viewBox="0 0 22 22"><path d="M20 14.500v5.500h-5.500z" fill="#4a9a4a"/><circle cx="10.500" cy="10.500" r="8.700" fill="url(#gL)" stroke="#6464c8" stroke-width="1.200"/><path d="M7.500 6.500v8M13.500 6.500v8" stroke="#4444b4" stroke-width="1.800"/><path d="M10.500 8.500v1.200M10.500 11.500v1.200" stroke="#4444b4" stroke-width="1.500"/></svg>
<div style="left:271px;top:57px;width:13px;height:13px;background:#0067c0;border-radius:3px"><svg style="left:0;top:0" width="13" height="13" viewBox="0 0 13 13"><path d="M3 6.700l2.400 2.400L10 4.300" fill="none" stroke="#fff" stroke-width="1.300"/></svg></div>
<span class="t" style="top:56.0px;font-size:12px;line-height:16px;color:#000;letter-spacing:-0.471px;left:287px;">Сглаж.</span>
<div style="left:335px;top:53px;width:63px;height:21px;background:#fff;border:1px solid #adadad;box-sizing:border-box"></div>
<div style="left:381px;top:54px;width:16px;height:19px;background:#f0f0f0;border-left:1px solid #adadad;box-sizing:border-box"></div>
<svg style="left:386px;top:62px" width="7" height="4" viewBox="0 0 7 4"><path d="M0 0h7L3.500 4z" fill="#222"/></svg>
<span class="t" style="top:55.0px;font-size:12px;line-height:16px;color:#000;letter-spacing:-0.600px;left:339px;">100%</span>
<svg style="left:408px;top:57px" width="18" height="15" viewBox="0 0 18 15"><rect x="1.700" y="1.700" width="14.500" height="11.500" fill="none" stroke="#111" stroke-width="1.600" stroke-dasharray="3.500 2"/></svg>
<svg style="left:431px;top:62px" width="7" height="4" viewBox="0 0 7 4"><path d="M0 0h7L3.500 4z" fill="#222"/></svg>
<svg style="left:447.0px;top:53.0px" width="22" height="22" viewBox="0 0 22 22"><defs><linearGradient id="gFilm" x1="0" y1="0" x2="0" y2="1"><stop offset="0" stop-color="#fff"/><stop offset="1" stop-color="#f0b8f0"/></linearGradient></defs><rect x="1" y="3.500" width="20" height="15" fill="url(#gFilm)"/><rect x="1" y="3" width="20" height="3.400" fill="#6a5ac8"/><rect x="1" y="15.600" width="20" height="3.400" fill="#6a5ac8"/><path d="M2.500 4.200h2v1.200h-2zM6.500 4.200h2v1.200h-2zM10.500 4.200h2v1.200h-2zM14.500 4.200h2v1.200h-2zM18.500 4.200h1.500v1.200h-1.500zM2.500 16.700h2v1.200h-2zM6.500 16.700h2v1.200h-2zM10.500 16.700h2v1.200h-2zM14.500 16.700h2v1.200h-2zM18.500 16.700h1.500v1.200h-1.500z" fill="#fff"/><path d="M7 5v12l8.500-6z" fill="#3ec832" stroke="#1a7a1a" stroke-width=".9"/></svg>
<svg style="left:480.0px;top:53.0px" width="22" height="22" viewBox="0 0 22 22"><rect x="1.500" y="1.500" width="14" height="14" fill="#e4f2fb" stroke="#5a6ac0" stroke-width="1"/><use href="#tree" x="3" y="2.500" width="11" height="12.500"/><rect x="10.500" y="10.500" width="9" height="9.500" fill="#e4f2fb" stroke="#5a6ac0" stroke-width="1"/><use href="#tree" x="12" y="11.500" width="6" height="8"/></svg>
<svg style="left:513.0px;top:53.0px" width="22" height="22" viewBox="0 0 22 22"><rect x="2" y="2" width="16" height="16" fill="#cfe8f6" stroke="#6a6ac8" stroke-width="1"/><path d="M11 9l3-4 4 5v8H2z" fill="#3a9a4a"/><path d="M6.500 3.500V15.500H19.500M3.500 6.500H15.500V19.500" fill="none" stroke="#8a7a00" stroke-width="2.400"/><path d="M6.500 3.500V15.500H19.500M3.500 6.500H15.500V19.500" fill="none" stroke="#e8d21a" stroke-width="1.100"/></svg>
<svg style="left:546.0px;top:53.0px" width="22" height="22" viewBox="0 0 22 22"><rect x="7.500" y="5.500" width="12" height="13" fill="#eaf4fb" stroke="#6a6ac8" stroke-width="1"/><text x="3" y="9" font-family="Liberation Sans" font-weight="700" font-size="8" fill="#b88a1a">A</text><text x="10" y="16" font-family="Liberation Sans" font-weight="700" font-style="italic" font-size="10" fill="#2a9a3a">B</text><text x="1.500" y="20" font-family="Liberation Sans" font-weight="700" font-style="italic" font-size="13" fill="#2222c8">C</text></svg>
<svg style="left:579.0px;top:53.0px" width="22" height="22" viewBox="0 0 22 22"><path d="M11 0.500l2 4 4.200-1.700-.7 4.400 4.500.8-3.200 3 3.200 3-4.500.8.700 4.400L13 17.500l-2 4-2-4-4.200 1.700.7-4.400-4.500-.8 3.200-3-3.200-3 4.500-.8-.7-4.400L9 4.500z" fill="#f5861f"/><circle cx="11" cy="11" r="6.300" fill="url(#gS)"/><circle cx="8.800" cy="9.500" r=".9" fill="#7a3a00"/><circle cx="13.200" cy="9.500" r=".9" fill="#7a3a00"/><path d="M7.500 12.500q3.500 3.500 7 0" fill="none" stroke="#7a3a00" stroke-width="1"/></svg>
<svg style="left:612.0px;top:53.0px" width="22" height="22" viewBox="0 0 22 22"><ellipse cx="11" cy="17.500" rx="8.500" ry="2.600" fill="#e8a81a" stroke="#1f9a3a" stroke-width="1.400"/><rect x="9" y="11" width="4" height="6" fill="#7ab47a"/><ellipse cx="11" cy="16.500" rx="5" ry="1.500" fill="#4aa44a"/><circle cx="11" cy="7" r="5.500" fill="url(#gGl)" stroke="#7aa47a" stroke-width=".6"/></svg>
<svg style="left:645.0px;top:53.0px" width="22" height="22" viewBox="0 0 22 22"><path d="M2.500 7.300L9.500 1.500V5Q19.500 5 18 17.500Q16.500 10 9.500 9.800V13.200z" fill="#40c840" stroke="#1a7a1a" stroke-width=".9" stroke-linejoin="round"/><path d="M12 9.800Q16 11 17.300 16" fill="none" stroke="#2a50b4" stroke-width="1.300"/><rect x=".5" y="13" width="12" height="7.500" fill="#d63a22"/><text x="1.300" y="19.500" font-family="Liberation Sans" font-weight="700" font-size="7.500" fill="#fff">90</text></svg>
<svg style="left:678.0px;top:53.0px" width="22" height="22" viewBox="0 0 22 22"><path d="M19.500 7.300L12.500 1.500V5Q2.500 5 4 17.500Q5.500 10 12.500 9.800V13.200z" fill="#40c840" stroke="#1a7a1a" stroke-width=".9" stroke-linejoin="round"/><path d="M10 9.800Q6 11 4.700 16" fill="none" stroke="#2a50b4" stroke-width="1.300"/><rect x="9.500" y="13" width="12" height="7.500" fill="#d63a22"/><text x="10.300" y="19.500" font-family="Liberation Sans" font-weight="700" font-size="7.500" fill="#fff">90</text></svg>
<svg style="left:711.0px;top:53.0px" width="22" height="22" viewBox="0 0 22 22"><rect x="1.500" y="3" width="8.500" height="16" fill="#d8eef8" stroke="#5a5ac0" stroke-width="1"/><rect x="12" y="3" width="8.500" height="16" fill="#d8eef8" stroke="#5a5ac0" stroke-width="1"/><use href="#tree" x="2.500" y="7" width="6.500" height="9"/><use href="#tree" x="13" y="7" width="6.500" height="9"/></svg>
<svg style="left:744.0px;top:53.0px" width="22" height="22" viewBox="0 0 22 22"><rect x="1.500" y="2.500" width="15" height="11" fill="#f0f0fa" stroke="#5a5ab8" stroke-width="1.600"/><path d="M6 14v3h6v-3M4 17.500h10" stroke="#5a5ab8" stroke-width="1.300" fill="none"/><rect x="9" y="9.500" width="11.500" height="9.500" fill="#ffe85a" stroke="#b89a00" stroke-width="1.400"/><rect x="11.500" y="12" width="6.500" height="4.500" fill="#fff" stroke="#8a7a4a" stroke-width=".7"/><rect x="11.500" y="14.500" width="6.500" height="2" fill="#6a5a8a"/></svg>
<svg style="left:777.0px;top:53.0px" width="22" height="22" viewBox="0 0 22 22"><path d="M7 2l10.500 11-1.500 1L5.500 3.500z" fill="#7a7ad0" stroke="#4a4ab0" stroke-width=".8"/><path d="M2 15.500L5.500 12h11l3.500 3.500V19H2z" fill="#eeeefa" stroke="#7a7ad0" stroke-width="1"/><path d="M2 15.500h18" stroke="#7a7ad0" stroke-width="1"/><rect x="4" y="16.700" width="6" height="1.200" fill="#9a9ad8"/></svg>
<svg style="left:810.0px;top:53.0px" width="22" height="22" viewBox="0 0 22 22"><path d="M5 6.500L15.500 2.500 18 8z" fill="#fff8c8" stroke="#b8860b" stroke-width=".9"/><rect x="2" y="7" width="18" height="12" rx="1" fill="url(#gY)" stroke="#b8860b" stroke-width="1"/><path d="M2.500 7.500L11 14l8.500-6.500M2.500 18.500l6-6M19.500 18.500l-6-6" fill="none" stroke="#b8860b" stroke-width=".9"/></svg>
<svg style="left:843.0px;top:53.0px" width="22" height="22" viewBox="0 0 22 22"><rect x="6" y="2" width="10" height="7" fill="#f4f0fa" stroke="#7a7ac8" stroke-width="1"/><rect x="6.500" y="5" width="9" height="3.500" fill="#9a6ab4"/><path d="M2 10.500Q2 8.500 4 8.500H18Q20 8.500 20 10.500V16.500H2z" fill="#b8b8ec" stroke="#6a6ac0" stroke-width="1"/><rect x="5" y="14" width="12" height="5.500" fill="#fff" stroke="#6a6ac0" stroke-width=".9"/><rect x="6.500" y="15.500" width="9" height="1.500" fill="#3ab44a"/></svg>
<svg style="left:876.0px;top:53.0px" width="22" height="22" viewBox="0 0 22 22"><rect x="2" y="3" width="16" height="15" fill="#d8e8f8" stroke="#6a6ac0" stroke-width="1.200"/><rect x="2.600" y="3.600" width="14.800" height="3" fill="#8a6a5a"/><rect x="4.500" y="9" width="2.800" height="2.800" fill="#e8a83a"/><rect x="8.700" y="9" width="2.800" height="2.800" fill="#e8a83a"/><rect x="12.900" y="9" width="2.800" height="2.800" fill="#e8a83a"/><path d="M9 15l3.500 3.500L20 11" fill="none" stroke="#0a7a1a" stroke-width="3.200"/><path d="M9 15l3.500 3.500L20 11" fill="none" stroke="#3ad43a" stroke-width="1.600"/></svg>
<div style="left:1499px;top:50px;width:33px;height:28px;background:#b9dcf7;border:1px solid #9ccdf2;box-sizing:border-box"></div>
<svg style="left:1472.0px;top:54.0px" width="20" height="20" viewBox="0 0 22 22"><rect x="1.500" y="2.500" width="19" height="2" fill="#fff" stroke="#5a5ab8" stroke-width="1"/><rect x="1.500" y="7" width="6" height="5.500" fill="#fff" stroke="#5a5ab8" stroke-width="1"/><rect x="1.500" y="14.500" width="6" height="5.500" fill="#fff" stroke="#5a5ab8" stroke-width="1"/><rect x="3" y="16.500" width="3" height="3" fill="#b8862a"/><path d="M3 9h3M3 10.500h3" stroke="#b8862a" stroke-width=".8"/><rect x="9.500" y="7" width="11" height="13" fill="#fff" stroke="#5a5ab8" stroke-width="1"/><path d="M11.500 9h2.800v2.800h-2.800zM15.800 9h2.800v2.800h-2.800zM11.500 13.500h2.800v2.800h-2.800zM15.800 13.500h2.800v2.800h-2.800z" fill="none" stroke="#b8862a" stroke-width="1.200"/></svg>
<svg style="left:1506.0px;top:54.0px" width="20" height="20" viewBox="0 0 22 22"><rect x="1.500" y="2.500" width="19" height="2" fill="#fff" stroke="#5a5ab8" stroke-width="1"/><rect x="1.500" y="7" width="5" height="13" fill="#fff" stroke="#5a5ab8" stroke-width="1"/><path d="M3 9.500h2M3 12h2M3 14.500h2M3 17h2" stroke="#b8862a" stroke-width="1"/><rect x="8.500" y="7" width="12" height="13" fill="#fff" stroke="#5a5ab8" stroke-width="1"/><circle cx="14.500" cy="12" r="2.200" fill="#b8862a"/><path d="M10 19.500q0-5 4.500-5t4.500 5z" fill="#b8862a"/></svg>
<svg style="left:1538.0px;top:54.0px" width="20" height="20" viewBox="0 0 22 22"><rect x="1.500" y="2.500" width="19" height="2" fill="#fff" stroke="#5a5ab8" stroke-width="1"/><rect x="1.500" y="7" width="19" height="13" fill="#fff" stroke="#5a5ab8" stroke-width="1"/><circle cx="11" cy="11.500" r="3" fill="#b8862a"/><path d="M4.500 19.500q0-6 6.500-6t6.500 6z" fill="#b8862a"/></svg>
<svg style="left:1570.0px;top:53.0px" width="22" height="22" viewBox="0 0 22 22"><rect x="4.500" y="4.500" width="13" height="13" fill="url(#gB)" stroke="#5a5ac8" stroke-width="1.200"/><g fill="#2ad42a" stroke="#0a7a0a" stroke-width=".6"><path d="M.8.800h6L5 2.600l3 3L5.600 8l-3-3L.8 6.800z"/><path d="M21.200.800h-6L17 2.600l-3 3L16.400 8l3-3 1.800 1.800z"/><path d="M.8 21.200h6L5 19.400l3-3L5.600 14l-3 3L.8 15.200z"/><path d="M21.200 21.200h-6L17 19.400l-3-3L16.400 14l3 3 1.800-1.800z"/></g></svg>
<svg style="left:352.0px;top:85.0px" width="18" height="18" viewBox="0 0 18 18"><path d="M1.500 9L8.500 2.500v3.700h7v5.600h-7v3.700z" fill="url(#gY)" stroke="#b88400" stroke-width="1"/></svg>
<svg style="left:379.0px;top:85.0px" width="18" height="18" viewBox="0 0 18 18"><path d="M16.500 9L9.500 2.500v3.700h-7v5.600h7v3.700z" fill="#fbfbfb" stroke="#8c8c8c" stroke-width="1"/></svg>
<svg style="left:406.0px;top:85.0px" width="18" height="18" viewBox="0 0 18 18"><use href="#yfold" x="1" y="1" width="16" height="16"/><path d="M11.500 1.500l4 4.500h-2.300v6.500h-3.400V6H7.500z" fill="#24d024" stroke="#0a7a10" stroke-width=".9"/></svg>
<svg style="left:433.0px;top:85.0px" width="18" height="18" viewBox="0 0 18 18"><use href="#yfold" x="1" y="1" width="16" height="16"/><rect x="4.500" y="6" width="9" height="8" fill="#fffbe0" opacity=".55"/><path d="M5 10V7.500h5V6l3 2.500-3 2.500V9.500H7V10zM13 10.500V13H8v1.500L5 12l3-2.500V11h3v-.5z" fill="#22c822" stroke="#0a7a10" stroke-width=".6"/></svg>
<svg style="left:460.0px;top:85.0px" width="18" height="18" viewBox="0 0 18 18"><use href="#yfold" x="1" y="1" width="16" height="16"/><path d="M9 4.800l1.500 3 3.300.5-2.400 2.300.6 3.300L9 12.300l-3 1.600.6-3.300-2.400-2.300 3.300-.5z" fill="#fff36a" stroke="#9a7400" stroke-width=".9"/></svg>
<svg style="left:487.0px;top:85.0px" width="18" height="18" viewBox="0 0 18 18"><use href="#yfold" x="1" y="1" width="16" height="16"/><path d="M12.500 2.500v6M9.500 5.500h6M10.400 3.400l4.200 4.200M14.600 3.400l-4.200 4.200" stroke="#f0381a" stroke-width="1"/><circle cx="12.500" cy="5.500" r="1.100" fill="#ffd0a0"/></svg>
<svg style="left:514.0px;top:85.0px" width="18" height="18" viewBox="0 0 18 18"><use href="#yfold" x="3.500" y="0" width="14" height="14"/><rect x="1.500" y="9.500" width="7" height="7" fill="#f4f4ff" stroke="#5a5ab8" stroke-width="1"/><rect x="4" y="11.500" width="6" height="6" fill="#fff" stroke="#5a5ab8" stroke-width="1"/><path d="M7 10.500l5.500-5.500M9 4.500h4v4" fill="none" stroke="#0a6a1a" stroke-width="2.800"/><path d="M7 10.500l5.500-5.500M9 4.500h4v4" fill="none" stroke="#3ad43a" stroke-width="1.400"/></svg>
<svg style="left:541.0px;top:85.0px" width="18" height="18" viewBox="0 0 18 18"><use href="#yfold" x="3.500" y="0" width="14" height="14"/><rect x="1.500" y="9.500" width="7" height="7" fill="#f4f4ff" stroke="#5a5ab8" stroke-width="1"/><rect x="4" y="11.500" width="6" height="6" fill="#fff" stroke="#5a5ab8" stroke-width="1"/><path d="M5 8.500h8.500M10.500 5.500l3 3-3 3" fill="none" stroke="#0a6a1a" stroke-width="2.800"/><path d="M5 8.500h8.500M10.500 5.500l3 3-3 3" fill="none" stroke="#3ad43a" stroke-width="1.400"/></svg>
<svg style="left:568.0px;top:85.0px" width="18" height="18" viewBox="0 0 18 18"><path d="M3 3.500l12 11.500M15 3l-12 12" stroke="#d83a1a" stroke-width="2.600" stroke-linecap="round"/></svg>
<svg style="left:596.0px;top:85.0px" width="18" height="18" viewBox="0 0 18 18"><rect x="1.500" y="2.500" width="15" height="13.500" fill="#fff" stroke="#3a3ab0" stroke-width="1"/><rect x="1.500" y="2.500" width="15" height="2.500" fill="#3a3ab0"/><path d="M3.500 6.500h3v3h-3zM7.500 6.500h3v3h-3zM11.500 6.500h3v3h-3z" fill="#2fa43a"/><path d="M3.500 11h3v3h-3zM7.500 11h3v3h-3zM11.500 11h3v3h-3z" fill="#f08a3a"/></svg>
<svg style="left:622.0px;top:85.0px" width="18" height="18" viewBox="0 0 18 18"><path d="M1 3.500h16M1 6.500h16M1 9.500h16M1 12.500h16M1 15.500h16" stroke="#4a4ab8" stroke-width="1" stroke-dasharray="1 1 4 1 4 1 4"/><path d="M1 1.500h16" stroke="#4a4ab8" stroke-width="1" stroke-dasharray="1 1"/></svg>
<svg style="left:649.0px;top:85.0px" width="18" height="18" viewBox="0 0 18 18"><g fill="none" stroke="#5a5ac0" stroke-width="1"><rect x="1.500" y="3.500" width="2" height="2"/><rect x="8.500" y="3.500" width="2" height="2"/><rect x="1.500" y="8.500" width="2" height="2"/><rect x="8.500" y="8.500" width="2" height="2"/><rect x="1.500" y="13.500" width="2" height="2"/><rect x="8.500" y="13.500" width="2" height="2"/><path d="M4.500 4.500h2.500M11.500 4.500h4.500M4.500 9.500h2.500M11.500 9.500h4.500M4.500 14.500h2.500M11.500 14.500h4.500"/></g></svg>
<svg style="left:351px;top:111px" width="16" height="14"><use href="#folder"/></svg>
<svg style="left:1576px;top:109px" width="18" height="18" viewBox="0 0 18 18"><ellipse cx="9" cy="3.500" rx="7" ry="2.300" fill="#e8e8f4" stroke="#6a6ab0" stroke-width="1"/><path d="M2.300 4.500L3.500 15.500Q9 18 14.500 15.500L15.700 4.500" fill="#f4f4fc" stroke="#6a6ab0" stroke-width="1"/><path d="M5 6.500l.6 9M13 6.500l-.6 9" stroke="#c0c0dc" stroke-width="1"/></svg>
<svg style="left:2px;top:3px" width="16" height="16" viewBox="0 0 16 16"><path d="M8 .4l1.800 2.100h3.500V6L15.600 8l-2.300 2v3.500H9.800L8 15.600l-1.800-2.100H2.700V10L.4 8l2.300-2V2.500h3.500z" fill="#e0481a"/><path d="M8 1.500l4.600 1.900 1.900 4.600-1.900 4.600L8 14.500l-4.600-1.900L1.500 8l1.900-4.600z" fill="#f5a623"/><path d="M8 1.500l4.600 1.900L8 8zM14.500 8l-1.900 4.600L8 8zM8 14.500l-4.600-1.900L8 8zM1.500 8l1.900-4.600L8 8z" fill="#d8981a"/><ellipse cx="8" cy="8" rx="4.300" ry="3.200" fill="#fff"/><circle cx="8.600" cy="8" r="2.300" fill="#1a2a5a"/><circle cx="7.700" cy="7.200" r=".8" fill="#fff"/></svg>
<svg style="left:1557px;top:821px" width="16" height="14" viewBox="0 0 16 14"><defs><linearGradient id="gT" x1="0" y1="0" x2="1" y2="1"><stop offset="0" stop-color="#8cbccc"/><stop offset="1" stop-color="#d4ecf2"/></linearGradient></defs><rect x="3.200" y="3" width="9.600" height="8" fill="url(#gT)" stroke="#0a6666" stroke-width="1.400"/><path d="M8 .8v2.200M8 11v2.200M1 7h2.200M12.800 7H15M6.800 1h2.400M6.800 13h2.400M1.200 5.800v2.400M14.800 5.800v2.400" stroke="#0a6666" stroke-width="1"/></svg>
<svg style="left:1580px;top:821px" width="16" height="14" viewBox="0 0 16 14"><rect x="3.200" y="3" width="9.600" height="8" fill="url(#gT)" stroke="#0a6666" stroke-width="1.400"/><path d="M.8 3.500V.8h3M15.200 3.500V.8h-3M.8 10.500v2.700h3M15.200 10.500v2.700h-3" fill="none" stroke="#0a6666" stroke-width="1.400"/></svg>
<div style="left:825px;top:175.500px;width:600px;height:600px;overflow:hidden;background:#3a3535"><div style="left:0;top:0;width:600px;height:600px;background:radial-gradient(ellipse 170px 30px at 330px 550px,#080505 0,#0e0a0a 50%,rgba(24,20,20,.7) 78%,rgba(40,34,34,0) 100%),radial-gradient(ellipse 330px 60px at 380px 548px,rgba(20,16,16,.8) 0,rgba(34,28,28,.45) 65%,rgba(50,44,44,0) 100%),linear-gradient(to right,#db7b2b 0,#dc7c2c 5%,#a07058 6.300%,#6e6868 7.800%,#726d6d 14%,#646060 24%,#4e4a4a 36%,#3a3535 48%,#2c2727 60%,#2e2828 88%,#3a2e2a 94.500%,#8a5430 96.200%,#c66c26 97.300%,#d47628 100%)"></div><div style="left:0;top:572px;width:600px;height:28px;background:linear-gradient(to bottom,rgba(80,76,76,0),rgba(86,80,80,.35))"></div><svg style="left:30px;top:540px;mix-blend-mode:soft-light;opacity:.55;-webkit-mask-image:linear-gradient(to right,transparent 0,#000 7%,#000 93%,transparent 100%);mask-image:linear-gradient(to right,transparent 0,#000 7%,#000 93%,transparent 100%)" width="560" height="60"><filter id="fur" x="0" y="0" width="100%" height="100%"><feTurbulence type="fractalNoise" baseFrequency="0.16 0.018" numOctaves="3" seed="7"/><feColorMatrix type="matrix" values="0 0 0 0 .5  0 0 0 0 .5  0 0 0 0 .5  1.6 0 0 0 -.3"/></filter><g transform="rotate(28 272 30)"><rect x="-60" y="-160" width="700" height="380" filter="url(#fur)"/></g></svg></div>
<div style="left:355px;top:690px;width:130px;height:141px;border:1px solid #9c9c9c;border-radius:7px;box-sizing:border-box;background:#f4f3ef"></div>
<div style="left:493px;top:690px;width:130px;height:141px;border:1px solid #9c9c9c;border-radius:7px;box-sizing:border-box;background:#f4f3ef"></div>
<svg style="left:390px;top:722.500px" width="60" height="90" viewBox="0 0 60 90"><defs><linearGradient id="fbg" x1="0" y1="0" x2="1" y2="0"><stop offset="0" stop-color="#2a2422"/><stop offset=".45" stop-color="#39403e"/><stop offset=".8" stop-color="#6c7c7e"/><stop offset="1" stop-color="#869292"/></linearGradient><linearGradient id="ffl" x1="0" y1="0" x2="1" y2="0"><stop offset="0" stop-color="#2a1f1d"/><stop offset=".6" stop-color="#3a302c"/><stop offset="1" stop-color="#5c5a56"/></linearGradient><radialGradient id="fbd" cx=".55" cy=".4" r=".7"><stop offset="0" stop-color="#4f7c3a"/><stop offset=".55" stop-color="#386434"/><stop offset="1" stop-color="#22422c"/></radialGradient><filter id="b1" x="-10%" y="-10%" width="120%" height="120%"><feGaussianBlur stdDeviation=".7"/></filter></defs><filter id="b3" x="-30%" y="-30%" width="160%" height="160%"><feGaussianBlur stdDeviation="3"/></filter><rect width="60" height="90" fill="url(#fbg)"/><g filter="url(#b3)"><rect x="40" y="-6" width="26" height="22" fill="#3e262c"/><rect x="47" y="18" width="20" height="50" fill="#87969a"/><rect x="-6" y="-6" width="22" height="80" fill="#272120"/></g><g filter="url(#b1)"><rect x="-4" y="71" width="68" height="24" fill="url(#ffl)"/></g><g filter="url(#b1)"><path d="M6 70Q1 52 8 40Q10 22 22 14Q36 8 46 16Q52 22 50 32Q54 50 50 72Q28 80 6 70z" fill="url(#fbd)"/><path d="M8 42Q10 22 24 15Q38 10 47 18Q51 24 49 33Q44 22 34 22Q22 24 16 36Q12 44 8 42z" fill="#2b5a3c"/><path d="M6 68Q2 52 9 42Q16 46 18 60Q18 70 14 74z" fill="#2a4f40"/><ellipse cx="36" cy="36" rx="9" ry="9.500" fill="#628c3a"/><ellipse cx="44" cy="25" rx="4.500" ry="4" fill="#4f8a3c"/><ellipse cx="31" cy="26" rx="4" ry="3" fill="#3f7a38"/><ellipse cx="45" cy="25" rx="1.600" ry="1.300" fill="#141a14"/><ellipse cx="32" cy="27" rx="1.500" ry="1.100" fill="#141a14"/><path d="M28 46Q36 50 44 44" stroke="#2c4f2a" stroke-width="1" fill="none"/><path d="M24 52v20M29 50v24M34 50v24M39 50v23M44 52v20" stroke="#7a9c44" stroke-width="1.800" opacity=".6"/><path d="M22 54Q34 48 47 54" stroke="#2f5a30" stroke-width="1.500" fill="none"/><ellipse cx="24" cy="74" rx="3" ry="2.200" fill="#b4c084"/><ellipse cx="30.500" cy="75" rx="3" ry="2.200" fill="#b4c084"/><ellipse cx="37" cy="75" rx="3" ry="2.200" fill="#b4c084"/><ellipse cx="43" cy="74" rx="3" ry="2.200" fill="#a8b47a"/></g></svg>
<svg style="left:528px;top:722.500px" width="60" height="90" viewBox="0 0 60 90"><defs><radialGradient id="lbg" cx=".75" cy=".45" r=".8"><stop offset="0" stop-color="#45423c"/><stop offset="1" stop-color="#1b1712"/></radialGradient><radialGradient id="lgl" cx=".55" cy=".62" r=".62"><stop offset="0" stop-color="#b88a26"/><stop offset=".55" stop-color="#7a5e20"/><stop offset="1" stop-color="#46381a"/></radialGradient><linearGradient id="lrf" x1="0" y1="0" x2="0" y2="1"><stop offset="0" stop-color="#5a4210"/><stop offset=".55" stop-color="#c4941e"/><stop offset="1" stop-color="#8a6414"/></linearGradient><filter id="b2" x="-10%" y="-10%" width="120%" height="120%"><feGaussianBlur stdDeviation=".6"/></filter><filter id="b4" x="-30%" y="-30%" width="160%" height="160%"><feGaussianBlur stdDeviation="1.800"/></filter></defs><rect width="60" height="90" fill="url(#lbg)"/><g filter="url(#b2)"><g filter="url(#b4)"><path d="M7 79Q28 76 46 82L49 92H5z" fill="url(#lrf)" opacity=".85"/></g><path d="M4 17L43 16L55.500 22V71L43 80L4 74.500z" fill="#140e08"/><path d="M6.500 20L41 19V76L6.500 71z" fill="url(#lgl)"/><path d="M45 20L53.500 24V69L45 75z" fill="#6a5220"/><path d="M18.500 64V48q-1.500-6 0-8l1.300 5 .7-9 1.500 8 1-9 1.500 9 1.500-7q1 5-1 11v16z" fill="#f0cc50"/><path d="M31.500 65V49q-1-5 .5-8l1.200 5 .8-8 1.500 8 1.200-7 1.300 7 1.200-5q1 5-1 10v14z" fill="#ecc648"/><path d="M6.500 67L41 72L53.500 66" stroke="#d8b040" stroke-width="1.200" fill="none" opacity=".8"/></g><path d="M5 17V74.500M43 16V80M55 22V71" stroke="#120c06" stroke-width="2"/></svg>
<span class="t" style="top:813.0px;font-size:11px;line-height:16px;color:#5c5c5c;letter-spacing:0.683px;left:365.7px;">600x900</span>
<span class="t" style="top:813.0px;font-size:11px;line-height:16px;color:#5c5c5c;letter-spacing:-0.469px;left:455px;">JPG</span>
<span class="t" style="top:813.0px;font-size:11px;line-height:16px;color:#5c5c5c;letter-spacing:0.683px;left:503.7px;">600x900</span>
<span class="t" style="top:813.0px;font-size:11px;line-height:16px;color:#5c5c5c;letter-spacing:-0.469px;left:593px;">JPG</span>

<svg width="0" height="0" style="left:0;top:0"><defs>
<pattern id="lines" width="4" height="3" patternUnits="userSpaceOnUse"><rect width="4" height="3" fill="#e6e6e6"/><rect y="1.500" width="4" height="1.200" fill="#8c8c8c"/></pattern>
<symbol id="fJ" viewBox="0 0 16 16"><rect x="4" y="0" width="12" height="16" fill="url(#lines)" stroke="#8a8a8a" stroke-width=".8"/><rect x="0" y="5" width="16" height="8" fill="#dc1f1f"/><text x="8" y="11.700" text-anchor="middle" font-family="Liberation Sans" font-weight="700" font-size="7.500" fill="#fff">JPG</text></symbol>
<symbol id="fP" viewBox="0 0 16 16"><rect x="4" y="0" width="12" height="16" fill="url(#lines)" stroke="#8a8a8a" stroke-width=".8"/><rect x="0" y="5" width="16" height="8" fill="#a41fb4"/><text x="8" y="11.700" text-anchor="middle" font-family="Liberation Sans" font-weight="700" font-size="7" fill="#fff">PNG</text></symbol>
<symbol id="sJ" viewBox="0 0 16 16"><rect x="4" y="0" width="12" height="16" fill="#4a9aca"/><path d="M6 2h8M6 14.500h8" stroke="#3a82b4" stroke-width="1"/><rect x="0" y="5" width="16" height="8" fill="#6a3f8e"/><text x="8" y="11.700" text-anchor="middle" font-family="Liberation Sans" font-weight="700" font-size="7.500" fill="#d8d0ec">JPG</text></symbol>
<symbol id="sP" viewBox="0 0 16 16"><rect x="4" y="0" width="12" height="16" fill="#4a9aca"/><path d="M6 2h8M6 14.500h8" stroke="#3a82b4" stroke-width="1"/><rect x="0" y="5" width="16" height="8" fill="#3f3fd4"/><text x="8" y="11.700" text-anchor="middle" font-family="Liberation Sans" font-weight="700" font-size="7" fill="#d8d8f8">PNG</text></symbol>
</defs></svg>

<div style="left:159px;top:136px;width:1282px;height:592px;border-radius:8px;box-shadow:0 10px 30px 2px rgba(0,0,0,.38),0 0 3px rgba(0,0,0,.22),0 0 0 1px rgba(214,240,255,.6)"></div>
<div style="left:159px;top:136px;width:1282px;height:592px;border-radius:8px;background:#f0f0f0;border:1px solid #4688c0;border-top-color:#0078d4;box-shadow:inset 0 0 0 1.500px #dcf5fc;box-sizing:border-box;overflow:hidden"><div style="left:-1px;top:-1px;width:1282px;height:31.200px;background:#0078d4"></div></div>
<svg style="left:168.300px;top:143.700px" width="15" height="15" viewBox="0 0 16 16"><path d="M8 .4l1.800 2.100h3.500V6L15.600 8l-2.300 2v3.500H9.800L8 15.600l-1.800-2.100H2.700V10L.4 8l2.300-2V2.500h3.500z" fill="#e0481a"/><path d="M8 1.500l4.600 1.900 1.900 4.600-1.900 4.600L8 14.500l-4.600-1.900L1.500 8l1.900-4.600z" fill="#f5a623"/><path d="M8 1.500l4.600 1.900L8 8zM14.500 8l-1.900 4.600L8 8zM8 14.500l-4.600-1.900L8 8zM1.500 8l1.900-4.600L8 8z" fill="#d8981a"/><ellipse cx="8" cy="8" rx="4.300" ry="3.200" fill="#fff"/><circle cx="8.600" cy="8" r="2.300" fill="#1a2a5a"/><circle cx="7.700" cy="7.200" r=".8" fill="#fff"/></svg>
<span class="t" style="top:144.0px;font-size:12px;line-height:16px;color:#fff;letter-spacing:0.074px;left:189.5px;">Обработка группы изображений</span>
<svg style="left:1315px;top:140px" width="115" height="24" viewBox="0 0 115 24" fill="none" stroke="#fff" stroke-width="1.100"><path d="M6 11.500h10" stroke="#4da3e8"/><rect x="51.500" y="6.500" width="9.500" height="9.500" rx="1"/><path d="M97.500 6.500l9.500 9.500M107 6.500l-9.500 9.500"/></svg>
<div style="left:259px;top:179px;width:93px;height:18px;background:#f6f6f6;border-right:1px solid #e6e6e6;box-sizing:border-box"></div>
<div style="left:161px;top:196px;width:1276px;height:1px;background:#fbfbfb"></div>
<div style="left:1437px;top:197px;width:1px;height:528px;background:#fafafa"></div>
<div style="left:161px;top:724px;width:1277px;height:1px;background:#fbfbfb"></div>
<div style="left:163px;top:178.5px;width:94px;height:16.5px;border:1px dotted #222;box-sizing:border-box"></div>
<span class="t" style="top:178.0px;font-size:11px;line-height:16px;color:#000;letter-spacing:-0.135px;left:167.5px;">Преобразование</span>
<span class="t" style="top:179.0px;font-size:11px;line-height:16px;color:#000;letter-spacing:-0.211px;left:263px;">Переименование</span>
<span class="t" style="top:206.0px;font-size:11px;line-height:16px;color:#000;letter-spacing:0.031px;left:169.5px;">Папок: 2, Файлов: 426</span>
<div style="left:170px;top:226px;width:609px;height:20px;background:#fff;border-bottom:1px solid #868686;box-sizing:border-box;border-radius:2px"></div>
<span class="t" style="top:227.0px;font-size:11px;line-height:16px;color:#000;letter-spacing:-0.013px;left:172.5px;">D:\Lenouser\Pictures\</span>
<div style="left:784px;top:225px;width:19px;height:22px;background:#fdfdfd;border:1px solid #dadada;border-bottom-color:#c4c4c4;border-radius:4px;box-sizing:border-box;"></div>
<span class="t" style="top:226.0px;font-size:11px;line-height:16px;color:#000;letter-spacing:-0.057px;left:789px;">...</span>
<svg style="left:813px;top:227.5px" width="18" height="18" viewBox="0 0 18 18"><use href="#yfold" x="1" y="1" width="16" height="16"/><path d="M10 2.500l4 4.500h-2.500v6h-3v-6H6z" fill="#2fc43a" stroke="#0a6a1a" stroke-width=".8"/></svg>
<svg style="left:838px;top:227.5px" width="18" height="18" viewBox="0 0 18 18"><use href="#yfold" x="1" y="2" width="15" height="15"/><path d="M5.500 10.500a3.500 3.500 0 0 1 6-2.500l1.500-1v4h-4l1.300-1.300a2 2 0 0 0-3.300 1zM12.500 11.500a3.500 3.500 0 0 1-6 2.500l-1.500 1v-4h4l-1.300 1.300a2 2 0 0 0 3.300-1z" fill="#2fb43a" stroke="#0a6a1a" stroke-width=".5"/></svg>
<svg style="left:863px;top:227.5px" width="18" height="18" viewBox="0 0 18 18"><path d="M1 3h16M1 5.500h16M1 8h16M1 10.500h16M1 13h16M1 15.500h16" stroke="#4a4ab8" stroke-width="1" stroke-dasharray="1 1 3 1 3 1 3 1 3"/></svg>
<svg style="left:887px;top:227.5px" width="18" height="18" viewBox="0 0 18 18"><g fill="none" stroke="#5a5ac0" stroke-width="1"><rect x="1.500" y="3" width="2" height="2"/><rect x="8" y="3" width="2" height="2"/><rect x="1.500" y="8" width="2" height="2"/><rect x="8" y="8" width="2" height="2"/><rect x="1.500" y="13" width="2" height="2"/><rect x="8" y="13" width="2" height="2"/><path d="M4.500 4h2.500M11 4h4.500M4.500 9h2.500M11 9h4.500M4.500 14h2.500M11 14h4.500"/></g></svg>
<svg style="left:912px;top:227.5px" width="18" height="18" viewBox="0 0 18 18"><rect x="1.500" y="2" width="15" height="14" fill="#fff" stroke="#3a3ab0" stroke-width="1.300"/><rect x="1.500" y="2" width="15" height="2.500" fill="#3a3ab0"/><path d="M3.500 6h3v3h-3zM7.500 6h3v3h-3zM11.500 6h3v3h-3z" fill="#2fa43a"/><path d="M3.500 10.500h3v3h-3zM7.500 10.500h3v3h-3zM11.500 10.500h3v3h-3z" fill="#f08a3a"/></svg>
<div style="left:170px;top:248px;width:765px;height:443px;background:#fff;border:1px solid #828282;box-sizing:border-box"></div>
<div style="left:917px;top:249px;width:17px;height:441px;background:#f3f3f3"></div>
<div style="left:923px;top:483px;width:2px;height:23px;background:#8a8a8a;border-radius:1px"></div>
<div style="left:391px;top:251px;width:1px;height:23px;background:#e6e6e6"></div>
<div style="left:471px;top:251px;width:1px;height:23px;background:#e6e6e6"></div>
<div style="left:591px;top:251px;width:1px;height:23px;background:#e6e6e6"></div>
<div style="left:711px;top:251px;width:1px;height:23px;background:#e6e6e6"></div>
<span class="t" style="top:254.0px;font-size:11px;line-height:16px;color:#222;letter-spacing:-0.600px;left:177px;">Имя</span>
<svg style="left:208px;top:258px" width="10" height="6" viewBox="0 0 10 6"><path d="M0 6L5 .5 10 6z" fill="#c4c4c4"/></svg>
<span class="t" style="top:254.0px;font-size:11px;line-height:16px;color:#222;letter-spacing:-0.419px;right:1134.92px;">Размер</span>
<span class="t" style="top:254.0px;font-size:11px;line-height:16px;color:#222;letter-spacing:-0.174px;left:477.5px;">Тип элемента</span>
<span class="t" style="top:254.0px;font-size:11px;line-height:16px;color:#222;letter-spacing:-0.047px;left:598px;">Дата изменения</span>
<div style="left:171px;top:275px;width:746px;height:415px;overflow:hidden">
<div style="left:22px;top:0px;width:126px;height:17px;background:#e9e9ea"></div>
<svg style="left:5px;top:-1px" width="16" height="16"><use href="#sJ"/></svg>
<div style="left:22px;top:17px;width:131px;height:17px;background:#e9e9ea"></div>
<svg style="left:5px;top:16px" width="16" height="16"><use href="#sJ"/></svg>
<div style="left:22px;top:34px;width:126px;height:17px;background:#e9e9ea"></div>
<svg style="left:5px;top:33px" width="16" height="16"><use href="#sJ"/></svg>
<div style="left:22px;top:51px;width:131px;height:17px;background:#e9e9ea"></div>
<svg style="left:5px;top:50px" width="16" height="16"><use href="#sJ"/></svg>
<div style="left:22px;top:68px;width:126px;height:17px;background:#e9e9ea"></div>
<svg style="left:5px;top:67px" width="16" height="16"><use href="#sP"/></svg>
<div style="left:22px;top:85px;width:126px;height:17px;background:#e9e9ea"></div>
<svg style="left:5px;top:84px" width="16" height="16"><use href="#sP"/></svg>
<div style="left:22px;top:102px;width:131px;height:17px;background:#e9e9ea"></div>
<svg style="left:5px;top:101px" width="16" height="16"><use href="#sP"/></svg>
<div style="left:22px;top:119px;width:126px;height:17px;background:#e9e9ea"></div>
<svg style="left:5px;top:118px" width="16" height="16"><use href="#sJ"/></svg>
<div style="left:22px;top:136px;width:131px;height:17px;background:#e9e9ea"></div>
<svg style="left:5px;top:135px" width="16" height="16"><use href="#sJ"/></svg>
<div style="left:22px;top:153px;width:126px;height:17px;background:#e9e9ea"></div>
<svg style="left:5px;top:152px" width="16" height="16"><use href="#sP"/></svg>
<div style="left:22px;top:170px;width:126px;height:17px;background:#e9e9ea"></div>
<svg style="left:5px;top:169px" width="16" height="16"><use href="#sP"/></svg>
<div style="left:22px;top:187px;width:126px;height:17px;background:#e9e9ea"></div>
<svg style="left:5px;top:186px" width="16" height="16"><use href="#sP"/></svg>
<div style="left:22px;top:204px;width:126px;height:17px;background:#e9e9ea"></div>
<svg style="left:5px;top:203px" width="16" height="16"><use href="#sP"/></svg>
<div style="left:22px;top:221px;width:131px;height:17px;background:#e9e9ea"></div>
<svg style="left:5px;top:220px" width="16" height="16"><use href="#sP"/></svg>
<div style="left:22px;top:238px;width:131px;height:17px;background:#e9e9ea"></div>
<svg style="left:5px;top:237px" width="16" height="16"><use href="#sJ"/></svg>
<div style="left:22px;top:255px;width:126px;height:17px;background:#e9e9ea"></div>
<svg style="left:5px;top:254px" width="16" height="16"><use href="#sJ"/></svg>
<div style="left:22px;top:272px;width:131px;height:17px;background:#e9e9ea"></div>
<svg style="left:5px;top:271px" width="16" height="16"><use href="#sJ"/></svg>
<div style="left:22px;top:289px;width:131px;height:17px;background:#e9e9ea"></div>
<svg style="left:5px;top:288px" width="16" height="16"><use href="#sJ"/></svg>
<div style="left:22px;top:306px;width:126px;height:17px;background:#e9e9ea"></div>
<svg style="left:5px;top:305px" width="16" height="16"><use href="#sJ"/></svg>
<div style="left:22px;top:323px;width:131px;height:17px;background:#e9e9ea"></div>
<svg style="left:5px;top:322px" width="16" height="16"><use href="#sJ"/></svg>
<div style="left:22px;top:340px;width:131px;height:17px;background:#e9e9ea"></div>
<svg style="left:5px;top:339px" width="16" height="16"><use href="#sJ"/></svg>
<svg style="left:5px;top:356px" width="16" height="16"><use href="#fJ"/></svg>
<svg style="left:5px;top:373px" width="16" height="16"><use href="#fJ"/></svg>
<svg style="left:5px;top:390px" width="16" height="16"><use href="#fJ"/></svg>
<svg style="left:5px;top:407px" width="16" height="16"><use href="#fJ"/></svg>
</div>
<span class="t" style="top:275.0px;font-size:11px;line-height:16px;color:#000;letter-spacing:0.025px;left:194.5px;">245661_4_trinixy_ru.jpg</span>
<span class="t" style="top:275.0px;font-size:11px;line-height:16px;color:#000;letter-spacing:-0.040px;right:1134.54px;">63,0 КБ</span>
<span class="t" style="top:275.0px;font-size:11px;line-height:16px;color:#000;letter-spacing:-0.382px;left:477.5px;">FastStone JPG File</span>
<span class="t" style="top:275.0px;font-size:11px;line-height:16px;color:#000;letter-spacing:0.080px;left:598px;">22.01.2024 20:05</span>
<span class="t" style="top:292.0px;font-size:11px;line-height:16px;color:#000;letter-spacing:0.053px;left:194.5px;">245661_11_trinixy_ru.jpg</span>
<span class="t" style="top:292.0px;font-size:11px;line-height:16px;color:#000;letter-spacing:-0.040px;right:1134.54px;">72,1 КБ</span>
<span class="t" style="top:292.0px;font-size:11px;line-height:16px;color:#000;letter-spacing:-0.382px;left:477.5px;">FastStone JPG File</span>
<span class="t" style="top:292.0px;font-size:11px;line-height:16px;color:#000;letter-spacing:0.080px;left:598px;">22.01.2024 20:05</span>
<span class="t" style="top:309.0px;font-size:11px;line-height:16px;color:#000;letter-spacing:0.025px;left:194.5px;">245685_1_trinixy_ru.jpg</span>
<span class="t" style="top:309.0px;font-size:11px;line-height:16px;color:#000;letter-spacing:-0.040px;right:1134.54px;">72,5 КБ</span>
<span class="t" style="top:309.0px;font-size:11px;line-height:16px;color:#000;letter-spacing:-0.382px;left:477.5px;">FastStone JPG File</span>
<span class="t" style="top:309.0px;font-size:11px;line-height:16px;color:#000;letter-spacing:0.080px;left:598px;">23.01.2024 22:48</span>
<span class="t" style="top:326.0px;font-size:11px;line-height:16px;color:#000;letter-spacing:0.019px;left:194.5px;">245742_16_trinixy_ru.jpg</span>
<span class="t" style="top:326.0px;font-size:11px;line-height:16px;color:#000;letter-spacing:-0.040px;right:1134.54px;">39,0 КБ</span>
<span class="t" style="top:326.0px;font-size:11px;line-height:16px;color:#000;letter-spacing:-0.382px;left:477.5px;">FastStone JPG File</span>
<span class="t" style="top:326.0px;font-size:11px;line-height:16px;color:#000;letter-spacing:0.080px;left:598px;">24.01.2024 21:29</span>
<span class="t" style="top:343.0px;font-size:11px;line-height:16px;color:#000;letter-spacing:-0.135px;left:194.5px;">246178_5_trinixy_ru.png</span>
<span class="t" style="top:343.0px;font-size:11px;line-height:16px;color:#000;letter-spacing:-0.040px;right:1134.54px;">921 КБ</span>
<span class="t" style="top:343.0px;font-size:11px;line-height:16px;color:#000;letter-spacing:-0.379px;left:477.5px;">FastStone PNG File</span>
<span class="t" style="top:343.0px;font-size:11px;line-height:16px;color:#000;letter-spacing:0.080px;left:598px;">08.02.2024 12:54</span>
<span class="t" style="top:360.0px;font-size:11px;line-height:16px;color:#000;letter-spacing:-0.135px;left:194.5px;">246178_6_trinixy_ru.png</span>
<span class="t" style="top:360.0px;font-size:11px;line-height:16px;color:#000;letter-spacing:-0.040px;right:1134.54px;">614 КБ</span>
<span class="t" style="top:360.0px;font-size:11px;line-height:16px;color:#000;letter-spacing:-0.379px;left:477.5px;">FastStone PNG File</span>
<span class="t" style="top:360.0px;font-size:11px;line-height:16px;color:#000;letter-spacing:0.080px;left:598px;">08.02.2024 12:54</span>
<span class="t" style="top:377.0px;font-size:11px;line-height:16px;color:#000;letter-spacing:-0.134px;left:194.5px;">246178_15_trinixy_ru.png</span>
<span class="t" style="top:377.0px;font-size:11px;line-height:16px;color:#000;letter-spacing:-0.040px;right:1134.54px;">1,03 МБ</span>
<span class="t" style="top:377.0px;font-size:11px;line-height:16px;color:#000;letter-spacing:-0.379px;left:477.5px;">FastStone PNG File</span>
<span class="t" style="top:377.0px;font-size:11px;line-height:16px;color:#000;letter-spacing:0.080px;left:598px;">08.02.2024 12:55</span>
<span class="t" style="top:394.0px;font-size:11px;line-height:16px;color:#000;letter-spacing:0.025px;left:194.5px;">246745_8_trinixy_ru.jpg</span>
<span class="t" style="top:394.0px;font-size:11px;line-height:16px;color:#000;letter-spacing:-0.040px;right:1134.54px;">58,3 КБ</span>
<span class="t" style="top:394.0px;font-size:11px;line-height:16px;color:#000;letter-spacing:-0.382px;left:477.5px;">FastStone JPG File</span>
<span class="t" style="top:394.0px;font-size:11px;line-height:16px;color:#000;letter-spacing:0.080px;left:598px;">26.02.2024 21:29</span>
<span class="t" style="top:411.0px;font-size:11px;line-height:16px;color:#000;letter-spacing:0.019px;left:194.5px;">247212_10_trinixy_ru.jpg</span>
<span class="t" style="top:411.0px;font-size:11px;line-height:16px;color:#000;letter-spacing:-0.040px;right:1134.54px;">93,4 КБ</span>
<span class="t" style="top:411.0px;font-size:11px;line-height:16px;color:#000;letter-spacing:-0.382px;left:477.5px;">FastStone JPG File</span>
<span class="t" style="top:411.0px;font-size:11px;line-height:16px;color:#000;letter-spacing:0.080px;left:598px;">12.03.2024 21:31</span>
<span class="t" style="top:428.0px;font-size:11px;line-height:16px;color:#000;letter-spacing:-0.135px;left:194.5px;">247356_1_trinixy_ru.png</span>
<span class="t" style="top:428.0px;font-size:11px;line-height:16px;color:#000;letter-spacing:-0.040px;right:1134.54px;">408 КБ</span>
<span class="t" style="top:428.0px;font-size:11px;line-height:16px;color:#000;letter-spacing:-0.379px;left:477.5px;">FastStone PNG File</span>
<span class="t" style="top:428.0px;font-size:11px;line-height:16px;color:#000;letter-spacing:0.080px;left:598px;">15.03.2024 20:47</span>
<span class="t" style="top:445.0px;font-size:11px;line-height:16px;color:#000;letter-spacing:-0.135px;left:194.5px;">247356_2_trinixy_ru.png</span>
<span class="t" style="top:445.0px;font-size:11px;line-height:16px;color:#000;letter-spacing:-0.040px;right:1134.54px;">878 КБ</span>
<span class="t" style="top:445.0px;font-size:11px;line-height:16px;color:#000;letter-spacing:-0.379px;left:477.5px;">FastStone PNG File</span>
<span class="t" style="top:445.0px;font-size:11px;line-height:16px;color:#000;letter-spacing:0.080px;left:598px;">15.03.2024 20:47</span>
<span class="t" style="top:462.0px;font-size:11px;line-height:16px;color:#000;letter-spacing:-0.135px;left:194.5px;">247356_3_trinixy_ru.png</span>
<span class="t" style="top:462.0px;font-size:11px;line-height:16px;color:#000;letter-spacing:-0.040px;right:1134.54px;">620 КБ</span>
<span class="t" style="top:462.0px;font-size:11px;line-height:16px;color:#000;letter-spacing:-0.379px;left:477.5px;">FastStone PNG File</span>
<span class="t" style="top:462.0px;font-size:11px;line-height:16px;color:#000;letter-spacing:0.080px;left:598px;">15.03.2024 20:47</span>
<span class="t" style="top:479.0px;font-size:11px;line-height:16px;color:#000;letter-spacing:-0.135px;left:194.5px;">247356_5_trinixy_ru.png</span>
<span class="t" style="top:479.0px;font-size:11px;line-height:16px;color:#000;letter-spacing:-0.040px;right:1134.54px;">316 КБ</span>
<span class="t" style="top:479.0px;font-size:11px;line-height:16px;color:#000;letter-spacing:-0.379px;left:477.5px;">FastStone PNG File</span>
<span class="t" style="top:479.0px;font-size:11px;line-height:16px;color:#000;letter-spacing:0.080px;left:598px;">15.03.2024 20:47</span>
<span class="t" style="top:496.0px;font-size:11px;line-height:16px;color:#000;letter-spacing:-0.134px;left:194.5px;">247356_17_trinixy_ru.png</span>
<span class="t" style="top:496.0px;font-size:11px;line-height:16px;color:#000;letter-spacing:-0.040px;right:1134.54px;">664 КБ</span>
<span class="t" style="top:496.0px;font-size:11px;line-height:16px;color:#000;letter-spacing:-0.379px;left:477.5px;">FastStone PNG File</span>
<span class="t" style="top:496.0px;font-size:11px;line-height:16px;color:#000;letter-spacing:0.080px;left:598px;">15.03.2024 20:47</span>
<span class="t" style="top:513.0px;font-size:11px;line-height:16px;color:#000;letter-spacing:0.019px;left:194.5px;">247389_16_trinixy_ru.jpg</span>
<span class="t" style="top:513.0px;font-size:11px;line-height:16px;color:#000;letter-spacing:-0.040px;right:1134.54px;">64,0 КБ</span>
<span class="t" style="top:513.0px;font-size:11px;line-height:16px;color:#000;letter-spacing:-0.382px;left:477.5px;">FastStone JPG File</span>
<span class="t" style="top:513.0px;font-size:11px;line-height:16px;color:#000;letter-spacing:0.080px;left:598px;">18.03.2024 22:23</span>
<span class="t" style="top:530.0px;font-size:11px;line-height:16px;color:#000;letter-spacing:0.025px;left:194.5px;">247420_3_trinixy_ru.jpg</span>
<span class="t" style="top:530.0px;font-size:11px;line-height:16px;color:#000;letter-spacing:-0.040px;right:1134.54px;">14,0 КБ</span>
<span class="t" style="top:530.0px;font-size:11px;line-height:16px;color:#000;letter-spacing:-0.382px;left:477.5px;">FastStone JPG File</span>
<span class="t" style="top:530.0px;font-size:11px;line-height:16px;color:#000;letter-spacing:0.080px;left:598px;">18.03.2024 21:54</span>
<span class="t" style="top:547.0px;font-size:11px;line-height:16px;color:#000;letter-spacing:0.019px;left:194.5px;">247420_16_trinixy_ru.jpg</span>
<span class="t" style="top:547.0px;font-size:11px;line-height:16px;color:#000;letter-spacing:-0.040px;right:1134.54px;">89,4 КБ</span>
<span class="t" style="top:547.0px;font-size:11px;line-height:16px;color:#000;letter-spacing:-0.382px;left:477.5px;">FastStone JPG File</span>
<span class="t" style="top:547.0px;font-size:11px;line-height:16px;color:#000;letter-spacing:0.080px;left:598px;">18.03.2024 22:13</span>
<span class="t" style="top:564.0px;font-size:11px;line-height:16px;color:#000;letter-spacing:0.019px;left:194.5px;">248137_24_trinixy_ru.jpg</span>
<span class="t" style="top:564.0px;font-size:11px;line-height:16px;color:#000;letter-spacing:-0.040px;right:1134.54px;">95,3 КБ</span>
<span class="t" style="top:564.0px;font-size:11px;line-height:16px;color:#000;letter-spacing:-0.382px;left:477.5px;">FastStone JPG File</span>
<span class="t" style="top:564.0px;font-size:11px;line-height:16px;color:#000;letter-spacing:0.080px;left:598px;">08.04.2024 22:01</span>
<span class="t" style="top:581.0px;font-size:11px;line-height:16px;color:#000;letter-spacing:0.060px;left:194.5px;">248711_1_trinixy_ru.jpg</span>
<span class="t" style="top:581.0px;font-size:11px;line-height:16px;color:#000;letter-spacing:-0.040px;right:1134.54px;">51,1 КБ</span>
<span class="t" style="top:581.0px;font-size:11px;line-height:16px;color:#000;letter-spacing:-0.382px;left:477.5px;">FastStone JPG File</span>
<span class="t" style="top:581.0px;font-size:11px;line-height:16px;color:#000;letter-spacing:0.080px;left:598px;">27.04.2024 0:16</span>
<span class="t" style="top:598.0px;font-size:11px;line-height:16px;color:#000;letter-spacing:0.053px;left:194.5px;">249144_11_trinixy_ru.jpg</span>
<span class="t" style="top:598.0px;font-size:11px;line-height:16px;color:#000;letter-spacing:-0.040px;right:1134.54px;">179 КБ</span>
<span class="t" style="top:598.0px;font-size:11px;line-height:16px;color:#000;letter-spacing:-0.382px;left:477.5px;">FastStone JPG File</span>
<span class="t" style="top:598.0px;font-size:11px;line-height:16px;color:#000;letter-spacing:0.080px;left:598px;">11.05.2024 16:09</span>
<span class="t" style="top:615.0px;font-size:11px;line-height:16px;color:#000;letter-spacing:0.019px;left:194.5px;">249334_24_trinixy_ru.jpg</span>
<span class="t" style="top:615.0px;font-size:11px;line-height:16px;color:#000;letter-spacing:-0.040px;right:1134.54px;">90,8 КБ</span>
<span class="t" style="top:615.0px;font-size:11px;line-height:16px;color:#000;letter-spacing:-0.382px;left:477.5px;">FastStone JPG File</span>
<span class="t" style="top:615.0px;font-size:11px;line-height:16px;color:#000;letter-spacing:0.080px;left:598px;">17.05.2024 0:38</span>
<span class="t" style="top:632.0px;font-size:11px;line-height:16px;color:#000;left:194.5px;">249386.jpg</span>
<span class="t" style="top:632.0px;font-size:11px;line-height:16px;color:#000;letter-spacing:-0.040px;right:1134.54px;">46,4 КБ</span>
<span class="t" style="top:632.0px;font-size:11px;line-height:16px;color:#000;letter-spacing:-0.382px;left:477.5px;">FastStone JPG File</span>
<span class="t" style="top:632.0px;font-size:11px;line-height:16px;color:#000;letter-spacing:0.080px;left:598px;">20.05.2024 11:33</span>
<span class="t" style="top:649.0px;font-size:11px;line-height:16px;color:#000;left:194.5px;">249502.jpg</span>
<span class="t" style="top:649.0px;font-size:11px;line-height:16px;color:#000;letter-spacing:-0.040px;right:1134.54px;">45,9 КБ</span>
<span class="t" style="top:649.0px;font-size:11px;line-height:16px;color:#000;letter-spacing:-0.382px;left:477.5px;">FastStone JPG File</span>
<span class="t" style="top:649.0px;font-size:11px;line-height:16px;color:#000;letter-spacing:0.080px;left:598px;">22.05.2024 23:40</span>
<span class="t" style="top:666.0px;font-size:11px;line-height:16px;color:#000;letter-spacing:0.025px;left:194.5px;">249502_6_trinixy_ru.jpg</span>
<span class="t" style="top:666.0px;font-size:11px;line-height:16px;color:#000;letter-spacing:-0.040px;right:1134.54px;">66,1 КБ</span>
<span class="t" style="top:666.0px;font-size:11px;line-height:16px;color:#000;letter-spacing:-0.382px;left:477.5px;">FastStone JPG File</span>
<span class="t" style="top:666.0px;font-size:11px;line-height:16px;color:#000;letter-spacing:0.080px;left:598px;">22.05.2024 23:40</span>
<span class="t" style="top:683.0px;font-size:11px;line-height:16px;color:#000;letter-spacing:0.025px;left:194.5px;height:7px;overflow:hidden;">249506_6_trinixy_ru.jpg</span>
<span class="t" style="top:683.0px;font-size:11px;line-height:16px;color:#000;letter-spacing:-0.040px;right:1134.54px;height:7px;overflow:hidden;">64,4 КБ</span>
<span class="t" style="top:683.0px;font-size:11px;line-height:16px;color:#000;letter-spacing:-0.382px;left:477.5px;height:7px;overflow:hidden;">FastStone JPG File</span>
<span class="t" style="top:683.0px;font-size:11px;line-height:16px;color:#000;letter-spacing:0.080px;left:598px;height:7px;overflow:hidden;">22.05.2024 14:29</span>
<div style="left:170px;top:694px;width:765px;height:22px;background:#fdfdfd;border:1px solid #dedede;border-bottom-color:#c6c6c6;border-radius:3px;box-sizing:border-box"></div>
<span class="t" style="top:697.0px;font-size:12px;line-height:16px;color:#000;letter-spacing:0.164px;left:174px;">Графика (*.jpg;*.jpe;*.jpeg;*.jfif;*.bmp;*.gif;*.tif;*.tiff;*.fax;*.cur;*.ico;*.png;*.pcx;*.webp;*.heic;*.heif;*.avif;*.jp2;*.j2k;*.tga;*.ppm;*.wmf;*.eı</span>
<svg style="left:920px;top:701px" width="10" height="7" viewBox="0 0 10 7" fill="none" stroke="#4a4a4a" stroke-width="1"><path d="M.8 1.200l4.200 4.300L9.200 1.200"/></svg>
<div style="left:941px;top:277px;width:101px;height:22px;background:#fdfdfd;border:1px solid #dadada;border-bottom-color:#c4c4c4;border-radius:4px;box-sizing:border-box;"></div>
<span class="t" style="top:280.0px;font-size:11px;line-height:16px;color:#000;letter-spacing:0.047px;left:957px;">Добавить</span>
<svg style="left:1012px;top:283px" width="14" height="10" viewBox="0 0 14 10"><path d="M0 3.200h8V0l6 5-6 5V6.800H0z" fill="#505050"/></svg>
<div style="left:941px;top:310px;width:101px;height:22px;background:#fdfdfd;border:1px solid #dadada;border-bottom-color:#c4c4c4;border-radius:4px;box-sizing:border-box;"></div>
<span class="t" style="top:313.0px;font-size:11px;line-height:16px;color:#000;left:947px;">Добавить все</span>
<svg style="left:1021px;top:316px" width="14" height="10" viewBox="0 0 14 10"><path d="M0 3.200h8V0l6 5-6 5V6.800H0z" fill="#505050"/></svg>
<div style="left:941px;top:344px;width:101px;height:22px;background:#fdfdfd;border:1px solid #dadada;border-bottom-color:#c4c4c4;border-radius:4px;box-sizing:border-box;"></div>
<span class="t" style="top:347.0px;font-size:11px;line-height:16px;color:#000;letter-spacing:0.143px;left:970px;">Удалить</span>
<div style="left:941px;top:377px;width:101px;height:22px;background:#fdfdfd;border:1px solid #dadada;border-bottom-color:#c4c4c4;border-radius:4px;box-sizing:border-box;"></div>
<span class="t" style="top:380.0px;font-size:11px;line-height:16px;color:#000;letter-spacing:0.139px;left:966.5px;">Очистить</span>
<span class="t" style="top:229.0px;font-size:11px;line-height:16px;color:#000;letter-spacing:-0.106px;left:1048.5px;">Выбрано:  Файлов: 21</span>
<span class="t" style="top:229.0px;font-size:11px;line-height:16px;color:#000;letter-spacing:0.097px;left:1218.5px;">Сортировка:</span>
<div style="left:1290px;top:225px;width:136px;height:21px;background:#fdfdfd;border:1px solid #dedede;border-bottom-color:#c6c6c6;border-radius:3px;box-sizing:border-box"></div>
<span class="t" style="top:228.0px;font-size:11px;line-height:16px;color:#000;left:1293.5px;">Не сортировать</span>
<svg style="left:1412px;top:232px" width="10" height="7" viewBox="0 0 10 7" fill="none" stroke="#4a4a4a" stroke-width="1"><path d="M.8 1.200l4.200 4.300L9.200 1.200"/></svg>
<div style="left:1048px;top:248px;width:378px;height:230px;background:#fff;border:1px solid #828282;box-sizing:border-box"></div>
<div style="left:1409px;top:249px;width:16px;height:228px;background:linear-gradient(to right,#fff,#f1f1f1 50%)"></div>
<div style="left:1415px;top:266px;width:2px;height:129px;background:#8a8a8a;border-radius:1px"></div>
<svg style="left:1053px;top:249px" width="16" height="16"><use href="#fJ"/></svg>
<span class="t" style="top:250.0px;font-size:11px;line-height:16px;color:#000;letter-spacing:0.025px;left:1074px;">245661_4_trinixy_ru.jpg</span>
<svg style="left:1053px;top:265px" width="16" height="16"><use href="#fJ"/></svg>
<span class="t" style="top:266.0px;font-size:11px;line-height:16px;color:#000;letter-spacing:0.053px;left:1074px;">245661_11_trinixy_ru.jpg</span>
<svg style="left:1053px;top:281px" width="16" height="16"><use href="#fJ"/></svg>
<span class="t" style="top:282.0px;font-size:11px;line-height:16px;color:#000;letter-spacing:0.025px;left:1074px;">245685_1_trinixy_ru.jpg</span>
<svg style="left:1053px;top:297px" width="16" height="16"><use href="#fJ"/></svg>
<span class="t" style="top:298.0px;font-size:11px;line-height:16px;color:#000;letter-spacing:0.019px;left:1074px;">245742_16_trinixy_ru.jpg</span>
<svg style="left:1053px;top:313px" width="16" height="16"><use href="#fP"/></svg>
<span class="t" style="top:314.0px;font-size:11px;line-height:16px;color:#000;letter-spacing:-0.135px;left:1074px;">246178_5_trinixy_ru.png</span>
<svg style="left:1053px;top:329px" width="16" height="16"><use href="#fP"/></svg>
<span class="t" style="top:330.0px;font-size:11px;line-height:16px;color:#000;letter-spacing:-0.135px;left:1074px;">246178_6_trinixy_ru.png</span>
<svg style="left:1053px;top:345px" width="16" height="16"><use href="#fP"/></svg>
<span class="t" style="top:346.0px;font-size:11px;line-height:16px;color:#000;letter-spacing:-0.134px;left:1074px;">246178_15_trinixy_ru.png</span>
<svg style="left:1053px;top:361px" width="16" height="16"><use href="#fJ"/></svg>
<span class="t" style="top:362.0px;font-size:11px;line-height:16px;color:#000;letter-spacing:0.025px;left:1074px;">246745_8_trinixy_ru.jpg</span>
<svg style="left:1053px;top:377px" width="16" height="16"><use href="#fJ"/></svg>
<span class="t" style="top:378.0px;font-size:11px;line-height:16px;color:#000;letter-spacing:0.019px;left:1074px;">247212_10_trinixy_ru.jpg</span>
<svg style="left:1053px;top:393px" width="16" height="16"><use href="#fP"/></svg>
<span class="t" style="top:394.0px;font-size:11px;line-height:16px;color:#000;letter-spacing:-0.135px;left:1074px;">247356_1_trinixy_ru.png</span>
<svg style="left:1053px;top:409px" width="16" height="16"><use href="#fP"/></svg>
<span class="t" style="top:410.0px;font-size:11px;line-height:16px;color:#000;letter-spacing:-0.135px;left:1074px;">247356_2_trinixy_ru.png</span>
<svg style="left:1053px;top:425px" width="16" height="16"><use href="#fP"/></svg>
<span class="t" style="top:426.0px;font-size:11px;line-height:16px;color:#000;letter-spacing:-0.135px;left:1074px;">247356_3_trinixy_ru.png</span>
<svg style="left:1053px;top:441px" width="16" height="16"><use href="#fP"/></svg>
<span class="t" style="top:442.0px;font-size:11px;line-height:16px;color:#000;letter-spacing:-0.135px;left:1074px;">247356_5_trinixy_ru.png</span>
<svg style="left:1053px;top:457px" width="16" height="16"><use href="#fP"/></svg>
<span class="t" style="top:458.0px;font-size:11px;line-height:16px;color:#000;letter-spacing:-0.134px;left:1074px;">247356_17_trinixy_ru.png</span>
<svg style="left:1053px;top:474px" width="16" height="3" viewBox="0 0 16 3"><rect x="4" width="12" height="3" fill="url(#lines)"/></svg>
<span class="t" style="top:488.0px;font-size:11px;line-height:16px;color:#000;letter-spacing:0.050px;right:556.45px;">Формат вывода:</span>
<div style="left:1047px;top:485px;width:287px;height:21px;background:#fdfdfd;border:1px solid #dedede;border-bottom-color:#c6c6c6;border-radius:3px;box-sizing:border-box"></div>
<span class="t" style="top:488.0px;font-size:11px;line-height:16px;color:#000;letter-spacing:-0.146px;left:1050.5px;">Формат JPEG (*.jpg)</span>
<svg style="left:1320px;top:492px" width="10" height="7" viewBox="0 0 10 7" fill="none" stroke="#4a4a4a" stroke-width="1"><path d="M.8 1.200l4.200 4.300L9.200 1.200"/></svg>
<div style="left:1337px;top:485px;width:88px;height:22px;background:#fdfdfd;border:1px solid #dadada;border-bottom-color:#c4c4c4;border-radius:4px;box-sizing:border-box;"></div>
<span class="t" style="top:487.5px;font-size:11px;line-height:16px;color:#000;letter-spacing:0.062px;left:1353px;">Настройки</span>
<span class="t" style="top:513.0px;font-size:11px;line-height:16px;color:#000;letter-spacing:0.050px;right:556.45px;">Целевая папка:</span>
<div style="left:1047px;top:516px;width:13px;height:13px;background:#0067c0;border-radius:2.500px;"><svg style="left:0;top:0" width="13" height="13" viewBox="0 0 13 13"><path d="M3 6.700l2.400 2.400L10 4.300" fill="none" stroke="#fff" stroke-width="1.300"/></svg></div>
<div style="left:1067px;top:512px;width:266px;height:20px;background:#fff;border-bottom:1px solid #868686;box-sizing:border-box;border-radius:2px"></div>
<div style="left:1337px;top:511px;width:88px;height:22px;background:#fdfdfd;border:1px solid #dadada;border-bottom-color:#c4c4c4;border-radius:4px;box-sizing:border-box;"></div>
<span class="t" style="top:513.5px;font-size:11px;line-height:16px;color:#000;letter-spacing:-0.045px;left:1358.5px;">Выбрать</span>
<div style="left:1047px;top:561px;width:13px;height:13px;background:#0067c0;border-radius:2.500px;"><svg style="left:0;top:0" width="13" height="13" viewBox="0 0 13 13"><path d="M3 6.700l2.400 2.400L10 4.300" fill="none" stroke="#fff" stroke-width="1.300"/></svg></div>
<span class="t" style="top:560.0px;font-size:11px;line-height:16px;color:#000;font-weight:700;letter-spacing:0.394px;left:1063px;">Изменить настройки (размеры...)</span>
<div style="left:1290px;top:556px;width:135px;height:22px;background:#fdfdfd;border:1px solid #dadada;border-bottom-color:#c4c4c4;border-radius:4px;box-sizing:border-box;"></div>
<span class="t" style="top:558.5px;font-size:11px;line-height:16px;color:#000;letter-spacing:0.025px;left:1317px;">Дополнительно</span>
<div style="left:939px;top:583.5px;width:13px;height:13px;background:#0067c0;border-radius:2.500px;"><svg style="left:0;top:0" width="13" height="13" viewBox="0 0 13 13"><path d="M3 6.700l2.400 2.400L10 4.300" fill="none" stroke="#fff" stroke-width="1.300"/></svg></div>
<span class="t" style="top:581.5px;font-size:11px;line-height:16px;color:#000;letter-spacing:-0.281px;left:954.5px;">Просмотр</span>
<div style="left:938px;top:599px;width:106px;height:81px;border:1px solid #a6a6a6;box-sizing:border-box;background:#efefef"></div>
<div style="left:1047px;top:586px;width:13px;height:13px;background:#f7f7f7;border:1px solid #bcbcbc;border-radius:2.500px;box-sizing:border-box;"></div>
<span class="t" style="top:585.0px;font-size:11px;line-height:16px;color:#000;letter-spacing:-0.244px;left:1062.5px;">Менять имя</span>
<div style="left:1047px;top:609px;width:13px;height:13px;background:#f7f7f7;border:1px solid #bcbcbc;border-radius:2.500px;box-sizing:border-box;"></div>
<span class="t" style="top:608.0px;font-size:11px;line-height:16px;color:#000;letter-spacing:-0.304px;left:1062.5px;">Расширения файлов - ЗАГЛАВНЫМИ буквами</span>
<div style="left:1047px;top:632px;width:13px;height:13px;background:#0067c0;border-radius:2.500px;"><svg style="left:0;top:0" width="13" height="13" viewBox="0 0 13 13"><path d="M3 6.700l2.400 2.400L10 4.300" fill="none" stroke="#fff" stroke-width="1.300"/></svg></div>
<span class="t" style="top:631.0px;font-size:11px;line-height:16px;color:#000;letter-spacing:0.053px;left:1062.5px;">Сохранять дату и время</span>
<div style="left:1047px;top:655px;width:13px;height:13px;background:#f7f7f7;border:1px solid #bcbcbc;border-radius:2.500px;box-sizing:border-box;"></div>
<span class="t" style="top:654.0px;font-size:11px;line-height:16px;color:#000;letter-spacing:-0.071px;left:1062.5px;">Спрашивать при перезаписи</span>
<div style="left:1047px;top:678px;width:13px;height:13px;background:#0067c0;border-radius:2.500px;"><svg style="left:0;top:0" width="13" height="13" viewBox="0 0 13 13"><path d="M3 6.700l2.400 2.400L10 4.300" fill="none" stroke="#fff" stroke-width="1.300"/></svg></div>
<span class="t" style="top:677.0px;font-size:11px;line-height:16px;color:#000;left:1062.5px;">Показывать сообщения об ошибках</span>
<div style="left:1304px;top:680px;width:26px;height:22px;background:#fdfdfd;border:1px solid #dadada;border-bottom-color:#c4c4c4;border-radius:4px;box-sizing:border-box;"></div>
<svg style="left:1309px;top:683px" width="16" height="16" viewBox="0 0 16 16"><path d="M2.500 1.500h6.500l3.500 3.500v9.500h-10z" fill="#fff" stroke="#333" stroke-width="1"/><path d="M9 1.500v3.500h3.500" fill="none" stroke="#333" stroke-width="1"/><circle cx="9" cy="9.500" r="3" fill="#e8f0ff" stroke="#1a1ac8" stroke-width="1.400"/><path d="M11.200 11.800l3 3" stroke="#1a1ac8" stroke-width="1.800"/></svg>
<div style="left:1337px;top:668px;width:88px;height:45px;background:#fdfdfd;border:1px solid #dadada;border-bottom-color:#c4c4c4;border-radius:4px;box-sizing:border-box;"></div>
<svg style="left:1361px;top:683px" width="11" height="16" viewBox="0 0 11 16"><path d="M1 1l9 7-9 7z" fill="#3ad42a" stroke="#2aa41a" stroke-width=".8"/></svg>
<span class="t" style="top:683.0px;font-size:11px;line-height:16px;color:#000;letter-spacing:-0.188px;left:1376px;">ПУСК</span>
</body></html>
